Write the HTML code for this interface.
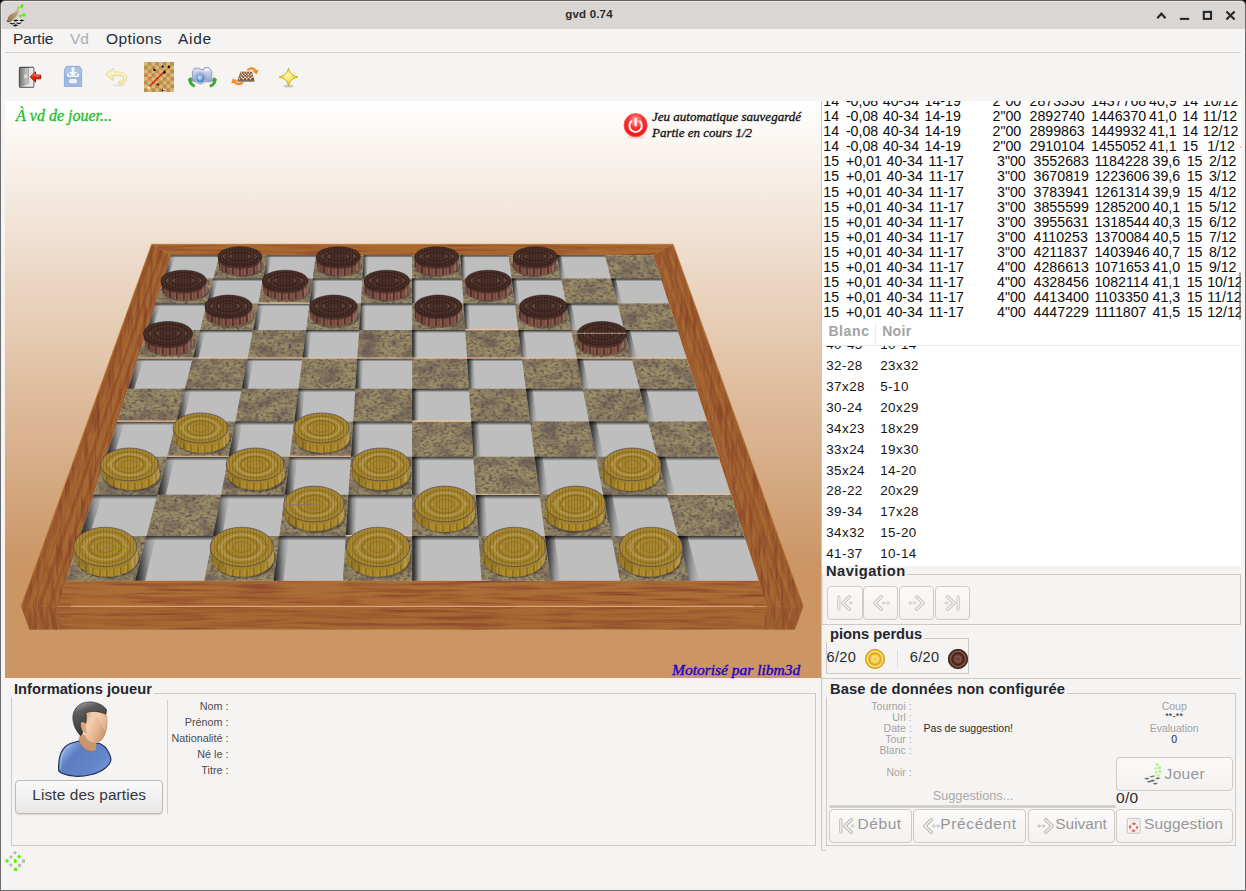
<!DOCTYPE html><html><head><meta charset="utf-8"><title>gvd 0.74</title><style>
html,body{margin:0;padding:0}
body{width:1246px;height:891px;position:relative;overflow:hidden;background:#f5f4f3;font-family:"Liberation Sans",sans-serif;color:#1a1a1a}
.abs{position:absolute}
#frame{position:absolute;left:0;top:0;width:1244px;height:889px;border:1px solid #6d6d6d;border-top-color:#5e5e5e;border-radius:5px 5px 0 0;pointer-events:none;z-index:50}
.crn{position:absolute;top:0;width:5px;height:5px;background:#050505}
#title{position:absolute;left:1px;top:1px;width:1244px;height:28px;background:#dad6d3;border-radius:4px 4px 0 0;box-shadow:inset 0 1px 0 #eae7e4, inset 1px 0 0 #e4e1de}
#title .t{position:absolute;left:0;width:1176px;top:7px;text-align:center;font-weight:bold;font-size:11.5px;color:#2b2b2b;letter-spacing:0.2px}
#menu span{position:absolute;top:30px;font-size:15.5px;color:#262a33;white-space:nowrap}
#msep{position:absolute;left:5px;top:52px;width:1236px;height:1px;background:#d4d2d0}
.gl{position:absolute;left:5px;top:101px}
.vt{position:absolute;font-family:"Liberation Serif",serif;font-style:italic;white-space:nowrap}
.ico{position:absolute}

.wh{position:absolute;background:#fff;overflow:hidden}
.lt span{position:absolute;font-size:14.2px;letter-spacing:0;white-space:nowrap;color:#0c0c0c;line-height:15px}
.mv span{position:absolute;font-size:13.4px;letter-spacing:0.45px;white-space:nowrap;color:#151515;line-height:15px}
.hd{position:absolute;font-weight:bold;font-size:14px;color:#a3a3a5;white-space:nowrap;letter-spacing:0.3px}
.gt{position:absolute;font-weight:bold;font-size:14.7px;color:#23262d;white-space:nowrap;background:#f5f4f3;line-height:16px}
.gb{position:absolute;border:1px solid #cdc9c6;box-sizing:border-box}
.btn{position:absolute;box-sizing:border-box;border:1px solid #cfcbc8;border-radius:4px;background:linear-gradient(#fbfaf9,#f3f2f1)}
.btn2{position:absolute;box-sizing:border-box;border:1px solid #bdb9b6;border-radius:4px;background:linear-gradient(#fafafa,#e9e8e7);box-shadow:0 1px 1px rgba(0,0,0,0.12)}
.bt{position:absolute;font-size:15.5px;color:#97979a;white-space:nowrap;line-height:18px;letter-spacing:0.3px}
.sl{position:absolute;font-size:10.5px;color:#a2a2a4;white-space:nowrap;line-height:11px;text-align:right}
.sd{position:absolute;font-size:10.5px;color:#2a2a2c;white-space:nowrap;line-height:11px}
.il{position:absolute;font-size:10.8px;color:#4a4a4e;white-space:nowrap;line-height:12px;text-align:right;width:120px;left:108.5px}
</style></head><body>
<div class="crn" style="left:0"></div><div class="crn" style="left:1241px"></div><div id="title"><div class="t">gvd 0.74</div><svg class="ico" style="left:4px;top:2px" width="24" height="24" viewBox="5 3 24 24">
<defs><linearGradient id="hg" x1="0" y1="1" x2="1" y2="0"><stop offset="0" stop-color="#8d7445"/><stop offset="0.6" stop-color="#b39a74"/><stop offset="1" stop-color="#d9c3a6"/></linearGradient></defs>
<g fill="#111"><path d="M6.2,20.9 l3.4,-1.3 2.8,1.1 -3.4,1.5z M12.8,20.6 l3.2,-1.2 2.8,1 -3.2,1.4z M19,20.4 l2.8,-1 2.6,1 -2.9,1.2z M9.4,23.2 l3.3,-1.3 2.9,1.1 -3.3,1.5z M15.8,23 l3.2,-1.2 2.8,1.1 -3.2,1.4z M12.6,25.4 l3,-1.1 2.6,1 -3,1.2z"/></g>
<g fill="#e9e9e9"><path d="M9.6,22 l3.2,-1.3 2.9,1.1 -3.2,1.4z M15.9,21.8 l3,-1.2 2.8,1 -3,1.3z"/></g>
<path d="M7.7,21.6 C7.2,17.6 9,15 12.6,13.6 C15,12.6 16.4,10.6 17.3,8.7 C17.9,7.5 19.2,7.8 19.1,9.2 C18.8,12.8 17.6,15.8 14.6,18 C12.8,19.3 11.4,20.6 10.8,21.9 Z" fill="url(#hg)"/>
<ellipse cx="22.9" cy="11" rx="1.5" ry="2.1" fill="#cfcdd1"/>
<g fill="#55f00a"><ellipse cx="21.9" cy="6.3" rx="1.5" ry="2.3" transform="rotate(22 21.9 6.3)"/><circle cx="18.5" cy="7.6" r="1.1"/><circle cx="20.4" cy="16" r="1.45"/><circle cx="24" cy="15" r="1.75"/></g>
</svg><svg class="ico" style="left:1150px;top:0" width="94" height="27" viewBox="1151 1 94 27">
<g fill="none" stroke="#23282d" stroke-width="2.1">
<path d="M1157.3,18.3 L1161.4,13.7 L1165.5,18.3" stroke-linejoin="miter"/>
<path d="M1179.9,18.9 H1189.2"/>
<rect x="1203.8" y="11.9" width="7.2" height="7"/>
<path d="M1226.4,11.6 L1234.6,19.6 M1234.6,11.6 L1226.4,19.6"/>
</g></svg></div>
<div id="menu"><span style="left:13px">Partie</span><span style="left:70px;color:#a9adb6">Vd</span><span style="left:106px;letter-spacing:0.4px">Options</span><span style="left:178px;letter-spacing:0.7px">Aide</span></div><div id="msep"></div>
<svg class="ico" style="left:17px;top:64px" width="28" height="26" viewBox="17 64 28 26">
<defs><linearGradient id="dg" x1="0" y1="0" x2="1" y2="0"><stop offset="0" stop-color="#6f6f6f"/><stop offset="0.55" stop-color="#c9c9c9"/><stop offset="1" stop-color="#f4f4f4"/></linearGradient></defs>
<rect x="19.4" y="67.4" width="14.4" height="19.8" rx="1" fill="url(#dg)" stroke="#4c4c4c" stroke-width="1.1"/>
<path d="M20,86.6 L28.5,83 L28.5,67.8 L33.4,67.8 L33.4,86.6z" fill="#e9e9e9" fill-opacity="0.85"/>
<path d="M20.5,86.5 L28.3,83.2 L28.3,68" fill="none" stroke="#8a8a8a" stroke-width="0.8"/>
<path d="M24.6,74 l2.3,2.3 -2.3,2.3 M26.9,76.3 h-3" fill="none" stroke="#f2f2f2" stroke-width="1"/>
<path d="M40.6,75.1 H35.6 V71.9 L30.2,76.9 L35.6,82 V78.8 H40.6z" fill="#e2220c" stroke="#a30f00" stroke-width="1" stroke-linejoin="round"/>
<path d="M39.9,75.9 H34.9 V73.7 L31.5,76.9" fill="none" stroke="#ff9a7a" stroke-width="0.8"/>
</svg>
<svg class="ico" style="left:62px;top:64px" width="22" height="25" viewBox="62 64 22 25">
<path d="M64.4,69.5 L66.4,66.4 H79.6 L81.6,69.5 V86.4 H64.4z" fill="#a9c3e8" stroke="#8eabd6" stroke-width="1"/>
<path d="M65.2,76.8 H80.8 V85.7 H65.2z" fill="#9db9e2"/>
<path d="M64.9,76.6 H81.1" stroke="#87a4d2" stroke-width="0.9"/>
<path d="M71.6,67.3 H74.4 V72 H77.3 L73,76 L68.7,72 H71.6z" fill="#f4f7fb"/>
<path d="M68,73.6 v2.6 h10 v-2.6" fill="none" stroke="#f4f7fb" stroke-width="1.6"/>
<rect x="69.6" y="79.6" width="6.8" height="3.2" rx="0.6" fill="#e8eef7" stroke="#f8fafd" stroke-width="0.9"/>
</svg>
<svg class="ico" style="left:103px;top:64px" width="27" height="25" viewBox="103 64 27 25">
<path d="M105.6,74.6 L113.3,68.4 V72.2 H119.5 C124,72.2 126.6,75 126.6,78.3 C126.6,81.6 124,84 120.2,84 H118.4 V81.4 H119.8 C122.2,81.4 123.5,80 123.5,78.3 C123.5,76.6 122.2,75.6 119.8,75.6 H113.3 V80.6z" fill="#f7eeb4" stroke="#e4d68c" stroke-width="1" stroke-linejoin="round"/>
<path d="M107.3,74.5 L112.5,70.3 V73.1 H119.6 C123,73.1 125,75 125.6,77" fill="none" stroke="#fffbe0" stroke-width="0.9"/>
<ellipse cx="119" cy="85.4" rx="6" ry="0.9" fill="#000" fill-opacity="0.08"/>
</svg>
<svg class="ico" style="left:144px;top:62px" width="30" height="30" viewBox="0 0 30 30"><rect width="30" height="30" fill="#d9b777"/><rect x="3.75" y="0.00" width="3.75" height="3.75" fill="#bd8d4b"/><rect x="11.25" y="0.00" width="3.75" height="3.75" fill="#bd8d4b"/><rect x="18.75" y="0.00" width="3.75" height="3.75" fill="#bd8d4b"/><rect x="26.25" y="0.00" width="3.75" height="3.75" fill="#bd8d4b"/><rect x="0.00" y="3.75" width="3.75" height="3.75" fill="#bd8d4b"/><rect x="7.50" y="3.75" width="3.75" height="3.75" fill="#bd8d4b"/><rect x="15.00" y="3.75" width="3.75" height="3.75" fill="#bd8d4b"/><rect x="22.50" y="3.75" width="3.75" height="3.75" fill="#bd8d4b"/><rect x="3.75" y="7.50" width="3.75" height="3.75" fill="#bd8d4b"/><rect x="11.25" y="7.50" width="3.75" height="3.75" fill="#bd8d4b"/><rect x="18.75" y="7.50" width="3.75" height="3.75" fill="#bd8d4b"/><rect x="26.25" y="7.50" width="3.75" height="3.75" fill="#bd8d4b"/><rect x="0.00" y="11.25" width="3.75" height="3.75" fill="#bd8d4b"/><rect x="7.50" y="11.25" width="3.75" height="3.75" fill="#bd8d4b"/><rect x="15.00" y="11.25" width="3.75" height="3.75" fill="#bd8d4b"/><rect x="22.50" y="11.25" width="3.75" height="3.75" fill="#bd8d4b"/><rect x="3.75" y="15.00" width="3.75" height="3.75" fill="#bd8d4b"/><rect x="11.25" y="15.00" width="3.75" height="3.75" fill="#bd8d4b"/><rect x="18.75" y="15.00" width="3.75" height="3.75" fill="#bd8d4b"/><rect x="26.25" y="15.00" width="3.75" height="3.75" fill="#bd8d4b"/><rect x="0.00" y="18.75" width="3.75" height="3.75" fill="#bd8d4b"/><rect x="7.50" y="18.75" width="3.75" height="3.75" fill="#bd8d4b"/><rect x="15.00" y="18.75" width="3.75" height="3.75" fill="#bd8d4b"/><rect x="22.50" y="18.75" width="3.75" height="3.75" fill="#bd8d4b"/><rect x="3.75" y="22.50" width="3.75" height="3.75" fill="#bd8d4b"/><rect x="11.25" y="22.50" width="3.75" height="3.75" fill="#bd8d4b"/><rect x="18.75" y="22.50" width="3.75" height="3.75" fill="#bd8d4b"/><rect x="26.25" y="22.50" width="3.75" height="3.75" fill="#bd8d4b"/><rect x="0.00" y="26.25" width="3.75" height="3.75" fill="#bd8d4b"/><rect x="7.50" y="26.25" width="3.75" height="3.75" fill="#bd8d4b"/><rect x="15.00" y="26.25" width="3.75" height="3.75" fill="#bd8d4b"/><rect x="22.50" y="26.25" width="3.75" height="3.75" fill="#bd8d4b"/><path d="M5.3,24.5 L21.7,8.1" stroke="#ee1111" stroke-width="1.15"/>
<path d="M19.5,11.5 L21.2,9.6" stroke="#111" stroke-width="2.2"/>
<circle cx="4.8" cy="25.6" r="1.3" fill="#fff"/>
<g fill="#0d0d0d"><circle cx="10.6" cy="7.8" r="1.4"/><circle cx="19" cy="4.4" r="1.2"/><circle cx="25" cy="4.8" r="1.2"/><path d="M12.2,23.3 l1.7,-2.6 1.7,2.6z"/><circle cx="18.8" cy="28" r="1.1"/></g>
<g fill="#fff"><circle cx="11.4" cy="7" r="0.6"/><circle cx="19.6" cy="3.7" r="0.5"/><circle cx="19.4" cy="27.4" r="0.6"/></g>
<circle cx="13.9" cy="23" r="0.7" fill="#e11"/><circle cx="6.5" cy="15.4" r="0.6" fill="#e11"/></svg>
<svg class="ico" style="left:185px;top:64px" width="34" height="26" viewBox="185 64 34 26">
<defs><linearGradient id="cg" x1="0" y1="0" x2="0" y2="1"><stop offset="0" stop-color="#dfe5f5"/><stop offset="1" stop-color="#94a3d2"/></linearGradient>
<radialGradient id="lg" cx="0.4" cy="0.35" r="0.7"><stop offset="0" stop-color="#d8ecfb"/><stop offset="0.6" stop-color="#6fa6d8"/><stop offset="1" stop-color="#3f72b0"/></radialGradient></defs>
<path d="M193.2,70.2 L194.4,68.2 H199.5 L200.4,69.4 H203.6 L204.4,67.6 H209 L210.4,70 C211.4,70.2 211.8,70.8 211.8,71.8 V80.2 C211.8,81.2 211.2,81.8 210.2,81.8 H194.2 C193,81.8 192.4,81.2 192.4,80.2 V71.8 C192.4,70.9 192.7,70.4 193.2,70.2z" fill="url(#cg)" stroke="#8c98c4" stroke-width="0.9"/>
<rect x="204.6" y="68.6" width="4.6" height="2.6" rx="0.8" fill="#f2f4fb"/>
<circle cx="200.4" cy="78.3" r="5.6" fill="#c9d0e8" stroke="#8f9bc8" stroke-width="0.9"/>
<circle cx="200.4" cy="78.3" r="3.9" fill="url(#lg)" stroke="#4a74ad" stroke-width="0.7"/>
<path d="M188.2,79.3 L190.8,77.4 L192.4,80.4 L191.2,80.6 C191.6,83 193,84.3 194.8,85 L194.2,87 C191.2,86.2 189.2,84.2 188.8,80.8z" fill="#3fae32" stroke="#2a8a22" stroke-width="0.6"/>
<path d="M216.6,79.6 L214,77.6 L212.2,80.6 L213.5,80.9 C213,83.1 211.6,84.4 209.8,85 L210.4,87 C213.4,86.3 215.4,84.3 215.9,81z" fill="#3fae32" stroke="#2a8a22" stroke-width="0.6"/>
</svg>
<svg class="ico" style="left:228px;top:64px" width="34" height="26" viewBox="228 64 34 26"><path d="M240.6,71.8 H251.8 L254.4,80.6 H237.4z" fill="#6b3d25"/><polygon fill="#f3e7cf" points="240.9,72.2 242.2,72.2 241.8,73.7 240.4,73.7"/><polygon fill="#8a5a3a" points="242.2,72.2 243.6,72.2 243.3,73.7 241.8,73.7"/><polygon fill="#f3e7cf" points="243.6,72.2 244.9,72.2 244.7,73.7 243.3,73.7"/><polygon fill="#8a5a3a" points="244.9,72.2 246.2,72.2 246.1,73.7 244.7,73.7"/><polygon fill="#f3e7cf" points="246.2,72.2 247.5,72.2 247.6,73.7 246.1,73.7"/><polygon fill="#8a5a3a" points="247.5,72.2 248.8,72.2 249.0,73.7 247.6,73.7"/><polygon fill="#f3e7cf" points="248.8,72.2 250.2,72.2 250.5,73.7 249.0,73.7"/><polygon fill="#8a5a3a" points="250.2,72.2 251.5,72.2 251.9,73.7 250.5,73.7"/><polygon fill="#8a5a3a" points="240.4,73.7 241.8,73.7 241.4,75.2 239.9,75.2"/><polygon fill="#f3e7cf" points="241.8,73.7 243.3,73.7 243.0,75.2 241.4,75.2"/><polygon fill="#8a5a3a" points="243.3,73.7 244.7,73.7 244.5,75.2 243.0,75.2"/><polygon fill="#f3e7cf" points="244.7,73.7 246.1,73.7 246.1,75.2 244.5,75.2"/><polygon fill="#8a5a3a" points="246.1,73.7 247.6,73.7 247.6,75.2 246.1,75.2"/><polygon fill="#f3e7cf" points="247.6,73.7 249.0,73.7 249.2,75.2 247.6,75.2"/><polygon fill="#8a5a3a" points="249.0,73.7 250.5,73.7 250.7,75.2 249.2,75.2"/><polygon fill="#f3e7cf" points="250.5,73.7 251.9,73.7 252.3,75.2 250.7,75.2"/><polygon fill="#f3e7cf" points="239.9,75.2 241.4,75.2 241.0,76.6 239.3,76.6"/><polygon fill="#8a5a3a" points="241.4,75.2 243.0,75.2 242.7,76.6 241.0,76.6"/><polygon fill="#f3e7cf" points="243.0,75.2 244.5,75.2 244.3,76.6 242.7,76.6"/><polygon fill="#8a5a3a" points="244.5,75.2 246.1,75.2 246.0,76.6 244.3,76.6"/><polygon fill="#f3e7cf" points="246.1,75.2 247.6,75.2 247.7,76.6 246.0,76.6"/><polygon fill="#8a5a3a" points="247.6,75.2 249.2,75.2 249.4,76.6 247.7,76.6"/><polygon fill="#f3e7cf" points="249.2,75.2 250.7,75.2 251.0,76.6 249.4,76.6"/><polygon fill="#8a5a3a" points="250.7,75.2 252.3,75.2 252.7,76.6 251.0,76.6"/><polygon fill="#8a5a3a" points="239.3,76.6 241.0,76.6 240.6,78.1 238.8,78.1"/><polygon fill="#f3e7cf" points="241.0,76.6 242.7,76.6 242.4,78.1 240.6,78.1"/><polygon fill="#8a5a3a" points="242.7,76.6 244.3,76.6 244.2,78.1 242.4,78.1"/><polygon fill="#f3e7cf" points="244.3,76.6 246.0,76.6 246.0,78.1 244.2,78.1"/><polygon fill="#8a5a3a" points="246.0,76.6 247.7,76.6 247.7,78.1 246.0,78.1"/><polygon fill="#f3e7cf" points="247.7,76.6 249.4,76.6 249.5,78.1 247.7,78.1"/><polygon fill="#8a5a3a" points="249.4,76.6 251.0,76.6 251.3,78.1 249.5,78.1"/><polygon fill="#f3e7cf" points="251.0,76.6 252.7,76.6 253.1,78.1 251.3,78.1"/><polygon fill="#f3e7cf" points="238.8,78.1 240.6,78.1 240.2,79.6 238.3,79.6"/><polygon fill="#8a5a3a" points="240.6,78.1 242.4,78.1 242.1,79.6 240.2,79.6"/><polygon fill="#f3e7cf" points="242.4,78.1 244.2,78.1 244.0,79.6 242.1,79.6"/><polygon fill="#8a5a3a" points="244.2,78.1 246.0,78.1 245.9,79.6 244.0,79.6"/><polygon fill="#f3e7cf" points="246.0,78.1 247.7,78.1 247.8,79.6 245.9,79.6"/><polygon fill="#8a5a3a" points="247.7,78.1 249.5,78.1 249.7,79.6 247.8,79.6"/><polygon fill="#f3e7cf" points="249.5,78.1 251.3,78.1 251.6,79.6 249.7,79.6"/><polygon fill="#8a5a3a" points="251.3,78.1 253.1,78.1 253.5,79.6 251.6,79.6"/><path d="M237.4,80.6 H254.4 V81.5 H237.4z" fill="#4a2a1a"/><path d="M247,69.6 C250,66.6 254.6,67 256.2,70.4 L258.2,69.8 L256.6,74 L252.8,71.6 L254.6,71 C253.4,68.8 250.4,68.8 248.4,70.8z" fill="#ff8a12" stroke="#f07400" stroke-width="0.4"/>
<path d="M243.4,83 C240.6,85.6 235.8,85.6 233.8,82.4 L231.6,83.2 L233,78.8 L237,80.8 L235.4,81.6 C236.8,83.6 239.8,83.4 241.8,81.8z" fill="#ff8a12" stroke="#f07400" stroke-width="0.4"/>
</svg>
<svg class="ico" style="left:276px;top:64px" width="26" height="26" viewBox="276 64 26 26">
<defs><radialGradient id="sg" cx="0.45" cy="0.4" r="0.6"><stop offset="0" stop-color="#fff9c0"/><stop offset="0.5" stop-color="#f3e35a"/><stop offset="1" stop-color="#e2c826"/></radialGradient></defs>
<ellipse cx="288.5" cy="86.2" rx="5" ry="1.4" fill="#000" fill-opacity="0.18"/>
<path d="M288.5,68 C289.4,72.6 291.6,75.2 297.8,77 C291.6,78.6 289.4,81.2 288.5,86 C287.6,81.2 285.4,78.6 279.2,77 C285.4,75.2 287.6,72.6 288.5,68z" fill="url(#sg)" stroke="#c9ad18" stroke-width="1" stroke-linejoin="round"/>
</svg>
<svg class="gl" width="816" height="577" viewBox="5 101 816 577">
<defs>
<linearGradient id="bg" x1="0" y1="0" x2="0" y2="1"><stop offset="0" stop-color="#ffffff"/><stop offset="0.81" stop-color="#cb9564"/><stop offset="1" stop-color="#cb9564"/></linearGradient>
<linearGradient id="shl" x1="0" y1="0" x2="1" y2="0"><stop offset="0" stop-color="#000" stop-opacity="0.85"/><stop offset="0.3" stop-color="#000" stop-opacity="0.58"/><stop offset="0.65" stop-color="#000" stop-opacity="0.2"/><stop offset="1" stop-color="#000" stop-opacity="0"/></linearGradient>
<linearGradient id="sht" x1="0" y1="0" x2="0" y2="1"><stop offset="0" stop-color="#000" stop-opacity="0.75"/><stop offset="1" stop-color="#000" stop-opacity="0"/></linearGradient>
<filter id="speck" x="0" y="0" width="100%" height="100%" color-interpolation-filters="sRGB">
<feTurbulence type="fractalNoise" baseFrequency="0.27 0.4" numOctaves="2" seed="4" result="n"/>
<feColorMatrix in="n" type="matrix" values="0 0 0 0 0.39  0 0 0 0 0.32  0 0 0 0 0.33  2.3 1.4 0 0 -1.68" result="d"/>
<feTurbulence type="fractalNoise" baseFrequency="0.05 0.09" numOctaves="2" seed="9" result="n2"/>
<feColorMatrix in="n2" type="matrix" values="0 0 0 0 0.32  0 0 0 0 0.26  0 0 0 0 0.28  1.4 0 0 0 -0.58" result="d2"/>
<feMerge result="m"><feMergeNode in="d2"/><feMergeNode in="d"/></feMerge>
<feComposite in="m" in2="SourceAlpha" operator="in" result="dd"/>
<feMerge><feMergeNode in="SourceGraphic"/><feMergeNode in="dd"/></feMerge>
</filter>
<filter id="woodh" x="0" y="0" width="100%" height="100%" color-interpolation-filters="sRGB">
<feTurbulence type="fractalNoise" baseFrequency="0.014 0.3" numOctaves="3" seed="11" result="n"/>
<feColorMatrix in="n" type="matrix" values="0 0 0 0 0.54  0 0 0 0 0.26  0 0 0 0 0.17  1.9 1.0 0 0 -1.3" result="d"/>
<feComposite in="d" in2="SourceAlpha" operator="in" result="dd"/>
<feMerge><feMergeNode in="SourceGraphic"/><feMergeNode in="dd"/></feMerge>
</filter>
<filter id="woodv" x="0" y="0" width="100%" height="100%" color-interpolation-filters="sRGB">
<feTurbulence type="fractalNoise" baseFrequency="0.32 0.03" numOctaves="3" seed="5" result="n"/>
<feColorMatrix in="n" type="matrix" values="0 0 0 0 0.50  0 0 0 0 0.24  0 0 0 0 0.15  1.7 0.9 0 0 -1.2" result="d"/>
<feComposite in="d" in2="SourceAlpha" operator="in" result="dd"/>
<feMerge><feMergeNode in="SourceGraphic"/><feMergeNode in="dd"/></feMerge>
</filter>
<pattern id="stY" width="7" height="40" patternUnits="userSpaceOnUse"><rect width="7" height="40" fill="#b08e2c"/><rect x="1" width="1.8" height="40" fill="#8e6e22"/><rect x="4.4" width="1" height="40" fill="#9e7e26"/></pattern>
<pattern id="stYt" width="3" height="40" patternUnits="userSpaceOnUse"><rect width="3" height="40" fill="#a88831"/><rect x="1" width="1" height="40" fill="#947528"/></pattern>
<pattern id="stB" width="7" height="40" patternUnits="userSpaceOnUse"><rect width="7" height="40" fill="#85564a"/><rect x="1" width="1.8" height="40" fill="#553229"/><rect x="4.6" width="1" height="40" fill="#6b4034"/></pattern>
<pattern id="stBt" width="3" height="40" patternUnits="userSpaceOnUse"><rect width="3" height="40" fill="#4c3129"/><rect x="1" width="1" height="40" fill="#412921"/></pattern>
<clipPath id="vw"><rect x="5" y="101" width="816" height="577"/></clipPath>
</defs>
<g clip-path="url(#vw)">
<rect x="5" y="101" width="816" height="577" fill="url(#bg)"/>
<g filter="url(#woodh)">
<polygon fill="#a96a31" points="151.7,244.3 673,244.3 653.1,255.2 171.3,255.2"/>
<polygon fill="#ab6d35" points="65.7,580.8 758.7,580.8 766.9,606.2 57.5,606.2"/>
<polygon fill="#a66933" points="57.5,607 766.9,607 762.1,629.6 62,629.6"/>
</g>
<g filter="url(#woodv)">
<polygon fill="#a56833" points="151.7,244.3 171.3,255.2 65.7,580.8 57.5,606.2 21.1,606.2"/>
<polygon fill="#a56833" points="673,244.3 653.1,255.2 758.7,580.8 766.9,606.2 803.3,606.2"/>
<polygon fill="#9f6332" points="21.1,606.2 57.5,606.2 62,629.6 29.3,629.6"/>
<polygon fill="#9f6332" points="803.3,606.2 766.9,606.2 762.1,629.6 794.9,629.6"/>
<polyline fill="none" stroke="#93502c" stroke-opacity="0.30" stroke-width="0.9" points="158,247.8 32.9,606.2 39.9,629.6"/>
<polyline fill="none" stroke="#8a4826" stroke-opacity="0.29" stroke-width="0.9" points="167.8,253.3 51,606.2 56.2,629.6"/>
<polyline fill="none" stroke="#8a4826" stroke-opacity="0.21" stroke-width="1.8" points="161.6,249.9 39.6,606.2 45.9,629.6"/>
<polyline fill="none" stroke="#9a5c2e" stroke-opacity="0.31" stroke-width="2.8" points="156.4,246.9 29.9,606.2 37.2,629.6"/>
<polyline fill="none" stroke="#93502c" stroke-opacity="0.37" stroke-width="2.2" points="154.1,245.7 25.6,606.2 33.3,629.6"/>
<polyline fill="none" stroke="#9a5c2e" stroke-opacity="0.30" stroke-width="3.1" points="152.9,245 23.4,606.2 31.3,629.6"/>
<polyline fill="none" stroke="#93502c" stroke-opacity="0.27" stroke-width="1.1" points="152.6,244.8 22.8,606.2 30.8,629.6"/>
<polyline fill="none" stroke="#9a4e30" stroke-opacity="0.35" stroke-width="2.4" points="154,245.6 25.4,606.2 33.2,629.6"/>
<polyline fill="none" stroke="#9a5c2e" stroke-opacity="0.37" stroke-width="1.7" points="153.7,245.4 24.8,606.2 32.7,629.6"/>
<polyline fill="none" stroke="#8a4826" stroke-opacity="0.35" stroke-width="2.3" points="162.4,250.3 41,606.2 47.2,629.6"/>
<polyline fill="none" stroke="#9a5c2e" stroke-opacity="0.31" stroke-width="1.6" points="161.4,249.7 39.2,606.2 45.5,629.6"/>
<polyline fill="none" stroke="#b47636" stroke-opacity="0.29" stroke-width="1.4" points="163.1,250.7 42.4,606.2 48.4,629.6"/>
<polyline fill="none" stroke="#93502c" stroke-opacity="0.20" stroke-width="1.5" points="155.2,246.3 27.6,606.2 35.2,629.6"/>
<polyline fill="none" stroke="#9a4e30" stroke-opacity="0.40" stroke-width="1.5" points="161.4,249.7 39.1,606.2 45.5,629.6"/>
<polyline fill="none" stroke="#8a4826" stroke-opacity="0.33" stroke-width="1.2" points="170.9,255 56.8,606.2 61.4,629.6"/>
<polyline fill="none" stroke="#b47636" stroke-opacity="0.31" stroke-width="3.1" points="158.4,248 33.5,606.2 40.5,629.6"/>
<polyline fill="none" stroke="#9a5c2e" stroke-opacity="0.35" stroke-width="2.9" points="153.2,245.1 23.9,606.2 31.8,629.6"/>
<polyline fill="none" stroke="#8e4a2a" stroke-opacity="0.29" stroke-width="2.0" points="157.8,247.7 32.5,606.2 39.6,629.6"/>
<polyline fill="none" stroke="#8a4826" stroke-opacity="0.43" stroke-width="3.1" points="167.3,253 50.1,606.2 55.4,629.6"/>
<polyline fill="none" stroke="#8e4a2a" stroke-opacity="0.20" stroke-width="2.6" points="161,249.5 38.4,606.2 44.8,629.6"/>
<polyline fill="none" stroke="#9a5c2e" stroke-opacity="0.48" stroke-width="2.8" points="157.8,247.7 32.4,606.2 39.4,629.6"/>
<polyline fill="none" stroke="#b47636" stroke-opacity="0.45" stroke-width="1.6" points="157.3,247.4 31.5,606.2 38.6,629.6"/>
<polyline fill="none" stroke="#9a4e30" stroke-opacity="0.23" stroke-width="1.1" points="654.3,254.6 769.1,606.2 764,629.6"/>
<polyline fill="none" stroke="#9a4e30" stroke-opacity="0.22" stroke-width="1.4" points="671.8,244.9 801.2,606.2 793,629.6"/>
<polyline fill="none" stroke="#b47636" stroke-opacity="0.20" stroke-width="1.9" points="665.2,248.6 789.1,606.2 782.1,629.6"/>
<polyline fill="none" stroke="#93502c" stroke-opacity="0.43" stroke-width="2.9" points="662.1,250.3 783.3,606.2 776.9,629.6"/>
<polyline fill="none" stroke="#b47636" stroke-opacity="0.48" stroke-width="2.4" points="667.5,247.3 793.2,606.2 785.8,629.6"/>
<polyline fill="none" stroke="#93502c" stroke-opacity="0.23" stroke-width="1.2" points="665.4,248.5 789.5,606.2 782.4,629.6"/>
<polyline fill="none" stroke="#93502c" stroke-opacity="0.18" stroke-width="2.8" points="668.4,246.8 794.9,606.2 787.3,629.6"/>
<polyline fill="none" stroke="#9a4e30" stroke-opacity="0.18" stroke-width="1.8" points="669.4,246.3 796.7,606.2 788.9,629.6"/>
<polyline fill="none" stroke="#9a5c2e" stroke-opacity="0.28" stroke-width="1.1" points="665.7,248.3 789.9,606.2 782.8,629.6"/>
<polyline fill="none" stroke="#9a5c2e" stroke-opacity="0.38" stroke-width="2.6" points="655.9,253.7 772,606.2 766.7,629.6"/>
<polyline fill="none" stroke="#8e4a2a" stroke-opacity="0.42" stroke-width="1.7" points="663.9,249.3 786.7,606.2 779.9,629.6"/>
<polyline fill="none" stroke="#8a4826" stroke-opacity="0.32" stroke-width="1.8" points="665.1,248.7 788.8,606.2 781.8,629.6"/>
<polyline fill="none" stroke="#93502c" stroke-opacity="0.31" stroke-width="1.1" points="669.2,246.4 796.4,606.2 788.6,629.6"/>
<polyline fill="none" stroke="#8a4826" stroke-opacity="0.18" stroke-width="1.2" points="661.1,250.9 781.4,606.2 775.2,629.6"/>
<polyline fill="none" stroke="#9a4e30" stroke-opacity="0.36" stroke-width="1.0" points="671,245.4 799.6,606.2 791.6,629.6"/>
<polyline fill="none" stroke="#b47636" stroke-opacity="0.22" stroke-width="1.4" points="668.9,246.6 795.7,606.2 788.1,629.6"/>
<polyline fill="none" stroke="#9a4e30" stroke-opacity="0.32" stroke-width="1.1" points="666.1,248.1 790.7,606.2 783.5,629.6"/>
<polyline fill="none" stroke="#b47636" stroke-opacity="0.32" stroke-width="1.5" points="663.3,249.6 785.5,606.2 778.9,629.6"/>
<polyline fill="none" stroke="#8e4a2a" stroke-opacity="0.28" stroke-width="1.4" points="670.1,245.9 798.1,606.2 790.2,629.6"/>
<polyline fill="none" stroke="#93502c" stroke-opacity="0.33" stroke-width="1.3" points="656.5,253.4 773.1,606.2 767.7,629.6"/>
<polyline fill="none" stroke="#9a4e30" stroke-opacity="0.22" stroke-width="2.1" points="654.1,254.7 768.7,606.2 763.7,629.6"/>
<polyline fill="none" stroke="#9a5c2e" stroke-opacity="0.27" stroke-width="2.3" points="672.5,244.6 802.3,606.2 794,629.6"/>
</g>
<line x1="71" y1="606.3" x2="753" y2="606.3" stroke="#dca479" stroke-width="1.2"/>
<polyline fill="none" stroke="#b9772f" stroke-width="0.8" points="21.1,606.2 151.7,244.3 673,244.3 803.3,606.2"/>
<polygon fill="#bebebe" points="171.3,255.2 653.1,255.2 758.7,580.8 65.7,580.8"/>
<g filter="url(#speck)" fill="#998d66">
<polygon points="219.4,255.2 267.6,255.2 263.1,278.6 213.4,278.6"/>
<polygon points="315.8,255.2 364,255.2 362.5,278.6 312.8,278.6"/>
<polygon points="412.2,255.2 460.4,255.2 461.9,278.6 412.2,278.6"/>
<polygon points="508.6,255.2 556.8,255.2 561.3,278.6 511.6,278.6"/>
<polygon points="605,255.2 653.1,255.2 660.7,278.6 611,278.6"/>
<polygon points="163.7,278.6 213.4,278.6 206.9,303.5 155.6,303.5"/>
<polygon points="263.1,278.6 312.8,278.6 309.6,303.5 258.3,303.5"/>
<polygon points="362.5,278.6 412.2,278.6 412.2,303.5 360.9,303.5"/>
<polygon points="461.9,278.6 511.6,278.6 514.8,303.5 463.5,303.5"/>
<polygon points="561.3,278.6 611,278.6 617.5,303.5 566.1,303.5"/>
<polygon points="206.9,303.5 258.3,303.5 253.1,330 200.1,330"/>
<polygon points="309.6,303.5 360.9,303.5 359.2,330 306.1,330"/>
<polygon points="412.2,303.5 463.5,303.5 465.2,330 412.2,330"/>
<polygon points="514.8,303.5 566.1,303.5 571.3,330 518.3,330"/>
<polygon points="617.5,303.5 668.8,303.5 677.4,330 624.3,330"/>
<polygon points="147,330 200.1,330 192.7,358.4 137.8,358.4"/>
<polygon points="253.1,330 306.1,330 302.4,358.4 247.6,358.4"/>
<polygon points="359.2,330 412.2,330 412.2,358.4 357.3,358.4"/>
<polygon points="465.2,330 518.3,330 522,358.4 467.1,358.4"/>
<polygon points="571.3,330 624.3,330 631.7,358.4 576.8,358.4"/>
<polygon points="192.7,358.4 247.6,358.4 241.7,388.8 184.8,388.8"/>
<polygon points="302.4,358.4 357.3,358.4 355.4,388.8 298.5,388.8"/>
<polygon points="412.2,358.4 467.1,358.4 469,388.8 412.2,388.8"/>
<polygon points="522,358.4 576.8,358.4 582.7,388.8 525.9,388.8"/>
<polygon points="631.7,358.4 686.6,358.4 696.4,388.8 639.6,388.8"/>
<polygon points="128,388.8 184.8,388.8 176.3,421.5 117.4,421.5"/>
<polygon points="241.7,388.8 298.5,388.8 294.3,421.5 235.3,421.5"/>
<polygon points="355.4,388.8 412.2,388.8 412.2,421.5 353.2,421.5"/>
<polygon points="469,388.8 525.9,388.8 530.1,421.5 471.2,421.5"/>
<polygon points="582.7,388.8 639.6,388.8 648.1,421.5 589.1,421.5"/>
<polygon points="176.3,421.5 235.3,421.5 228.5,456.7 167.2,456.7"/>
<polygon points="294.3,421.5 353.2,421.5 351,456.7 289.7,456.7"/>
<polygon points="412.2,421.5 471.2,421.5 473.4,456.7 412.2,456.7"/>
<polygon points="530.1,421.5 589.1,421.5 595.9,456.7 534.7,456.7"/>
<polygon points="648.1,421.5 707,421.5 718.4,456.7 657.2,456.7"/>
<polygon points="106,456.7 167.2,456.7 157.3,494.7 93.6,494.7"/>
<polygon points="228.5,456.7 289.7,456.7 284.8,494.7 221.1,494.7"/>
<polygon points="351,456.7 412.2,456.7 412.2,494.7 348.5,494.7"/>
<polygon points="473.4,456.7 534.7,456.7 539.6,494.7 475.9,494.7"/>
<polygon points="595.9,456.7 657.2,456.7 667.1,494.7 603.3,494.7"/>
<polygon points="157.3,494.7 221.1,494.7 213,536 146.6,536"/>
<polygon points="284.8,494.7 348.5,494.7 345.8,536 279.4,536"/>
<polygon points="412.2,494.7 475.9,494.7 478.6,536 412.2,536"/>
<polygon points="539.6,494.7 603.3,494.7 611.4,536 545,536"/>
<polygon points="667.1,494.7 730.8,494.7 744.1,536 677.8,536"/>
<polygon points="80.3,536 146.6,536 135,580.8 65.7,580.8"/>
<polygon points="213,536 279.4,536 273.6,580.8 204.3,580.8"/>
<polygon points="345.8,536 412.2,536 412.2,580.8 342.9,580.8"/>
<polygon points="478.6,536 545,536 550.8,580.8 481.5,580.8"/>
<polygon points="611.4,536 677.8,536 689.4,580.8 620.1,580.8"/>
</g>
<polygon fill="url(#shl)" points="171.3,255.2 175.3,255.2 167.9,278.6 163.7,278.6"/>
<polygon fill="url(#sht)" points="171.3,255.2 219.4,255.2 218.8,257.7 170.4,257.7"/>
<polygon fill="url(#shl)" points="267.6,255.2 271.7,255.2 267.3,278.6 263.1,278.6"/>
<polygon fill="url(#sht)" points="267.6,255.2 315.8,255.2 315.5,257.7 267.1,257.7"/>
<polygon fill="url(#shl)" points="364,255.2 368.1,255.2 366.7,278.6 362.5,278.6"/>
<polygon fill="url(#sht)" points="364,255.2 412.2,255.2 412.2,257.7 363.8,257.7"/>
<polygon fill="url(#shl)" points="460.4,255.2 464.5,255.2 466.1,278.6 461.9,278.6"/>
<polygon fill="url(#sht)" points="460.4,255.2 508.6,255.2 508.9,257.7 460.6,257.7"/>
<polygon fill="url(#shl)" points="556.8,255.2 560.9,255.2 565.5,278.6 561.3,278.6"/>
<polygon fill="url(#sht)" points="556.8,255.2 605,255.2 605.6,257.7 557.3,257.7"/>
<polygon fill="url(#shl)" points="213.4,278.6 217.9,278.6 211.6,303.5 206.9,303.5"/>
<polygon fill="url(#sht)" points="213.4,278.6 263.1,278.6 262.6,281.3 212.7,281.3"/>
<polygon fill="url(#shl)" points="312.8,278.6 317.3,278.6 314.3,303.5 309.6,303.5"/>
<polygon fill="url(#sht)" points="312.8,278.6 362.5,278.6 362.3,281.3 312.4,281.3"/>
<polygon fill="url(#shl)" points="412.2,278.6 416.7,278.6 416.9,303.5 412.2,303.5"/>
<polygon fill="url(#sht)" points="412.2,278.6 461.9,278.6 462.1,281.3 412.2,281.3"/>
<polygon fill="url(#shl)" points="511.6,278.6 516.2,278.6 519.5,303.5 514.8,303.5"/>
<polygon fill="url(#sht)" points="511.6,278.6 561.3,278.6 561.8,281.3 512,281.3"/>
<polygon fill="url(#shl)" points="611,278.6 615.6,278.6 622.2,303.5 617.5,303.5"/>
<polygon fill="url(#sht)" points="611,278.6 660.7,278.6 661.6,281.3 611.7,281.3"/>
<polygon fill="url(#shl)" points="155.6,303.5 160.6,303.5 152.2,330 147,330"/>
<polygon fill="url(#sht)" points="155.6,303.5 206.9,303.5 206.2,306.3 154.7,306.3"/>
<polygon fill="url(#shl)" points="258.3,303.5 263.3,303.5 258.3,330 253.1,330"/>
<polygon fill="url(#sht)" points="258.3,303.5 309.6,303.5 309.2,306.3 257.7,306.3"/>
<polygon fill="url(#shl)" points="360.9,303.5 365.9,303.5 364.4,330 359.2,330"/>
<polygon fill="url(#sht)" points="360.9,303.5 412.2,303.5 412.2,306.3 360.7,306.3"/>
<polygon fill="url(#shl)" points="463.5,303.5 468.5,303.5 470.4,330 465.2,330"/>
<polygon fill="url(#sht)" points="463.5,303.5 514.8,303.5 515.2,306.3 463.7,306.3"/>
<polygon fill="url(#shl)" points="566.1,303.5 571.2,303.5 576.5,330 571.3,330"/>
<polygon fill="url(#sht)" points="566.1,303.5 617.5,303.5 618.2,306.3 566.7,306.3"/>
<polygon fill="url(#shl)" points="200.1,330 205.6,330 198.4,358.4 192.7,358.4"/>
<polygon fill="url(#sht)" points="200.1,330 253.1,330 252.5,333 199.3,333"/>
<polygon fill="url(#shl)" points="306.1,330 311.7,330 308.2,358.4 302.4,358.4"/>
<polygon fill="url(#sht)" points="306.1,330 359.2,330 359,333 305.7,333"/>
<polygon fill="url(#shl)" points="412.2,330 417.7,330 417.9,358.4 412.2,358.4"/>
<polygon fill="url(#sht)" points="412.2,330 465.2,330 465.4,333 412.2,333"/>
<polygon fill="url(#shl)" points="518.3,330 523.8,330 527.7,358.4 522,358.4"/>
<polygon fill="url(#sht)" points="518.3,330 571.3,330 571.9,333 518.7,333"/>
<polygon fill="url(#shl)" points="624.3,330 629.9,330 637.4,358.4 631.7,358.4"/>
<polygon fill="url(#sht)" points="624.3,330 677.4,330 678.4,333 625.1,333"/>
<polygon fill="url(#shl)" points="137.8,358.4 143.9,358.4 134.3,388.8 128,388.8"/>
<polygon fill="url(#sht)" points="137.8,358.4 192.7,358.4 191.9,361.6 136.8,361.6"/>
<polygon fill="url(#shl)" points="247.6,358.4 253.7,358.4 248,388.8 241.7,388.8"/>
<polygon fill="url(#sht)" points="247.6,358.4 302.4,358.4 302,361.6 246.9,361.6"/>
<polygon fill="url(#shl)" points="357.3,358.4 363.4,358.4 361.7,388.8 355.4,388.8"/>
<polygon fill="url(#sht)" points="357.3,358.4 412.2,358.4 412.2,361.6 357.1,361.6"/>
<polygon fill="url(#shl)" points="467.1,358.4 473.2,358.4 475.4,388.8 469,388.8"/>
<polygon fill="url(#sht)" points="467.1,358.4 522,358.4 522.4,361.6 467.3,361.6"/>
<polygon fill="url(#shl)" points="576.8,358.4 582.9,358.4 589.1,388.8 582.7,388.8"/>
<polygon fill="url(#sht)" points="576.8,358.4 631.7,358.4 632.5,361.6 577.5,361.6"/>
<polygon fill="url(#shl)" points="184.8,388.8 191.5,388.8 183.3,421.5 176.3,421.5"/>
<polygon fill="url(#sht)" points="184.8,388.8 241.7,388.8 241,392.3 183.9,392.3"/>
<polygon fill="url(#shl)" points="298.5,388.8 305.2,388.8 301.2,421.5 294.3,421.5"/>
<polygon fill="url(#sht)" points="298.5,388.8 355.4,388.8 355.1,392.3 298.1,392.3"/>
<polygon fill="url(#shl)" points="412.2,388.8 418.9,388.8 419.1,421.5 412.2,421.5"/>
<polygon fill="url(#sht)" points="412.2,388.8 469,388.8 469.3,392.3 412.2,392.3"/>
<polygon fill="url(#shl)" points="525.9,388.8 532.6,388.8 537.1,421.5 530.1,421.5"/>
<polygon fill="url(#sht)" points="525.9,388.8 582.7,388.8 583.4,392.3 526.3,392.3"/>
<polygon fill="url(#shl)" points="639.6,388.8 646.3,388.8 655,421.5 648.1,421.5"/>
<polygon fill="url(#sht)" points="639.6,388.8 696.4,388.8 697.6,392.3 640.5,392.3"/>
<polygon fill="url(#shl)" points="117.4,421.5 124.7,421.5 113.6,456.7 106,456.7"/>
<polygon fill="url(#sht)" points="117.4,421.5 176.3,421.5 175.4,425.2 116.2,425.2"/>
<polygon fill="url(#shl)" points="235.3,421.5 242.6,421.5 236,456.7 228.5,456.7"/>
<polygon fill="url(#sht)" points="235.3,421.5 294.3,421.5 293.8,425.2 234.6,425.2"/>
<polygon fill="url(#shl)" points="353.2,421.5 360.5,421.5 358.5,456.7 351,456.7"/>
<polygon fill="url(#sht)" points="353.2,421.5 412.2,421.5 412.2,425.2 353,425.2"/>
<polygon fill="url(#shl)" points="471.2,421.5 478.5,421.5 481,456.7 473.4,456.7"/>
<polygon fill="url(#sht)" points="471.2,421.5 530.1,421.5 530.6,425.2 471.4,425.2"/>
<polygon fill="url(#shl)" points="589.1,421.5 596.4,421.5 603.5,456.7 595.9,456.7"/>
<polygon fill="url(#sht)" points="589.1,421.5 648.1,421.5 649,425.2 589.8,425.2"/>
<polygon fill="url(#shl)" points="167.2,456.7 175.2,456.7 165.7,494.7 157.3,494.7"/>
<polygon fill="url(#sht)" points="167.2,456.7 228.5,456.7 227.7,460.7 166.2,460.7"/>
<polygon fill="url(#shl)" points="289.7,456.7 297.7,456.7 293.1,494.7 284.8,494.7"/>
<polygon fill="url(#sht)" points="289.7,456.7 351,456.7 350.7,460.7 289.2,460.7"/>
<polygon fill="url(#shl)" points="412.2,456.7 420.2,456.7 420.5,494.7 412.2,494.7"/>
<polygon fill="url(#sht)" points="412.2,456.7 473.4,456.7 473.7,460.7 412.2,460.7"/>
<polygon fill="url(#shl)" points="534.7,456.7 542.7,456.7 547.9,494.7 539.6,494.7"/>
<polygon fill="url(#sht)" points="534.7,456.7 595.9,456.7 596.7,460.7 535.2,460.7"/>
<polygon fill="url(#shl)" points="657.2,456.7 665.2,456.7 675.4,494.7 667.1,494.7"/>
<polygon fill="url(#sht)" points="657.2,456.7 718.4,456.7 719.8,460.7 658.2,460.7"/>
<polygon fill="url(#shl)" points="93.6,494.7 102.4,494.7 89.4,536 80.3,536"/>
<polygon fill="url(#sht)" points="93.6,494.7 157.3,494.7 156.2,499.1 92.2,499.1"/>
<polygon fill="url(#shl)" points="221.1,494.7 229.8,494.7 222.1,536 213,536"/>
<polygon fill="url(#sht)" points="221.1,494.7 284.8,494.7 284.2,499.1 220.2,499.1"/>
<polygon fill="url(#shl)" points="348.5,494.7 357.2,494.7 354.9,536 345.8,536"/>
<polygon fill="url(#sht)" points="348.5,494.7 412.2,494.7 412.2,499.1 348.2,499.1"/>
<polygon fill="url(#shl)" points="475.9,494.7 484.6,494.7 487.7,536 478.6,536"/>
<polygon fill="url(#sht)" points="475.9,494.7 539.6,494.7 540.2,499.1 476.2,499.1"/>
<polygon fill="url(#shl)" points="603.3,494.7 612.1,494.7 620.5,536 611.4,536"/>
<polygon fill="url(#sht)" points="603.3,494.7 667.1,494.7 668.2,499.1 604.2,499.1"/>
<polygon fill="url(#shl)" points="146.6,536 156.2,536 145,580.8 135,580.8"/>
<polygon fill="url(#sht)" points="146.6,536 213,536 212.1,540.7 145.4,540.7"/>
<polygon fill="url(#shl)" points="279.4,536 288.9,536 283.6,580.8 273.6,580.8"/>
<polygon fill="url(#sht)" points="279.4,536 345.8,536 345.5,540.7 278.8,540.7"/>
<polygon fill="url(#shl)" points="412.2,536 421.7,536 422.1,580.8 412.2,580.8"/>
<polygon fill="url(#sht)" points="412.2,536 478.6,536 478.9,540.7 412.2,540.7"/>
<polygon fill="url(#shl)" points="545,536 554.5,536 560.7,580.8 550.8,580.8"/>
<polygon fill="url(#sht)" points="545,536 611.4,536 612.3,540.7 545.6,540.7"/>
<polygon fill="url(#shl)" points="677.8,536 687.3,536 699.3,580.8 689.4,580.8"/>
<polygon fill="url(#sht)" points="677.8,536 744.1,536 745.7,540.7 679,540.7"/>
<line x1="258.3" y1="303.1" x2="309.6" y2="303.1" stroke="#efc29a" stroke-width="1.1"/>
<line x1="465.2" y1="329.6" x2="518.3" y2="329.6" stroke="#efc29a" stroke-width="1.1"/>
<line x1="137.8" y1="358" x2="686.6" y2="358" stroke="#efc29a" stroke-width="1.1"/>
<line x1="117.4" y1="421.1" x2="176.3" y2="421.1" stroke="#efc29a" stroke-width="1.1"/>
<line x1="412.2" y1="421.1" x2="471.2" y2="421.1" stroke="#efc29a" stroke-width="1.1"/>
<line x1="167.2" y1="456.3" x2="228.5" y2="456.3" stroke="#efc29a" stroke-width="1.1"/>
<line x1="289.7" y1="456.3" x2="351" y2="456.3" stroke="#efc29a" stroke-width="1.1"/>
<line x1="475.9" y1="494.3" x2="539.6" y2="494.3" stroke="#efc29a" stroke-width="1.1"/>
<line x1="667.1" y1="494.3" x2="730.8" y2="494.3" stroke="#efc29a" stroke-width="1.1"/>
<line x1="345.8" y1="535.6" x2="412.2" y2="535.6" stroke="#efc29a" stroke-width="1.1"/>
<ellipse cx="241.7" cy="266.9" rx="22.7" ry="10" fill="#000" fill-opacity="0.25"/><path fill="url(#stB)" d="M218,256.3 L219,265.9 A21.9 9.5 0 0 0 262.8,265.9 L261.8,256.3 Z"/><path fill="#4a2e27" fill-opacity="0.93" d="M218,256.3 L218,259.2 A21.9 9.5 0 0 0 261.8,259.2 L261.8,256.3 Z"/><path fill="#000" fill-opacity="0.10" d="M218,256.3 L219,265.9 A21.9 9.5 0 0 0 228.9,273.8 L227.8,264.2 Z"/><path fill="#fff" fill-opacity="0.13" d="M261.8,256.3 L262.8,265.9 A21.9 9.5 0 0 1 258.5,271.6 L257.4,262 Z"/><ellipse cx="239.9" cy="256.3" rx="21.9" ry="9.5" fill="url(#stBt)" stroke="#140d10" stroke-width="0.8" stroke-opacity="0.6"/><ellipse cx="239.9" cy="256.6" rx="17.5" ry="7.6" fill="none" stroke="#2a1915" stroke-opacity="0.5" stroke-width="1.2"/><ellipse cx="239.9" cy="256.6" rx="11" ry="4.7" fill="none" stroke="#2a1915" stroke-opacity="0.5" stroke-width="1.4"/><ellipse cx="239.9" cy="256.6" rx="5.9" ry="2.6" fill="none" stroke="#2a1915" stroke-opacity="0.35" stroke-width="1.1"/><path d="M224.6,254.7 l-1.6,1.6 l1.6,1.6" fill="none" stroke="#b5a79c" stroke-opacity="0.55" stroke-width="0.9"/><path d="M231.2,254.7 l-1.6,1.6 l1.6,1.6" fill="none" stroke="#b5a79c" stroke-opacity="0.55" stroke-width="0.9"/><path d="M248.6,254.7 l1.6,1.6 l-1.6,1.6" fill="none" stroke="#b5a79c" stroke-opacity="0.55" stroke-width="0.9"/><path d="M255.2,254.7 l1.6,1.6 l-1.6,1.6" fill="none" stroke="#b5a79c" stroke-opacity="0.55" stroke-width="0.9"/>
<ellipse cx="339.6" cy="266.9" rx="22.7" ry="10" fill="#000" fill-opacity="0.25"/><path fill="url(#stB)" d="M316.4,256.3 L316.9,265.9 A21.9 9.5 0 0 0 360.7,265.9 L360.3,256.3 Z"/><path fill="#4a2e27" fill-opacity="0.93" d="M316.4,256.3 L316.4,259.2 A21.9 9.5 0 0 0 360.3,259.2 L360.3,256.3 Z"/><path fill="#000" fill-opacity="0.10" d="M316.4,256.3 L316.9,265.9 A21.9 9.5 0 0 0 326.7,273.8 L326.3,264.2 Z"/><path fill="#fff" fill-opacity="0.13" d="M360.3,256.3 L360.7,265.9 A21.9 9.5 0 0 1 356.3,271.6 L355.9,262 Z"/><ellipse cx="338.4" cy="256.3" rx="21.9" ry="9.5" fill="url(#stBt)" stroke="#140d10" stroke-width="0.8" stroke-opacity="0.6"/><ellipse cx="338.4" cy="256.6" rx="17.5" ry="7.6" fill="none" stroke="#2a1915" stroke-opacity="0.5" stroke-width="1.2"/><ellipse cx="338.4" cy="256.6" rx="11" ry="4.7" fill="none" stroke="#2a1915" stroke-opacity="0.5" stroke-width="1.4"/><ellipse cx="338.4" cy="256.6" rx="5.9" ry="2.6" fill="none" stroke="#2a1915" stroke-opacity="0.35" stroke-width="1.1"/><path d="M323.1,254.7 l-1.6,1.6 l1.6,1.6" fill="none" stroke="#b5a79c" stroke-opacity="0.55" stroke-width="0.9"/><path d="M329.7,254.7 l-1.6,1.6 l1.6,1.6" fill="none" stroke="#b5a79c" stroke-opacity="0.55" stroke-width="0.9"/><path d="M347,254.7 l1.6,1.6 l-1.6,1.6" fill="none" stroke="#b5a79c" stroke-opacity="0.55" stroke-width="0.9"/><path d="M353.6,254.7 l1.6,1.6 l-1.6,1.6" fill="none" stroke="#b5a79c" stroke-opacity="0.55" stroke-width="0.9"/>
<ellipse cx="437.5" cy="266.9" rx="22.7" ry="10" fill="#000" fill-opacity="0.25"/><path fill="url(#stB)" d="M414.9,256.3 L414.7,265.9 A21.9 9.5 0 0 0 458.6,265.9 L458.7,256.3 Z"/><path fill="#4a2e27" fill-opacity="0.93" d="M414.9,256.3 L414.9,259.2 A21.9 9.5 0 0 0 458.7,259.2 L458.7,256.3 Z"/><path fill="#000" fill-opacity="0.10" d="M414.9,256.3 L414.7,265.9 A21.9 9.5 0 0 0 424.6,273.8 L424.8,264.2 Z"/><path fill="#fff" fill-opacity="0.13" d="M458.7,256.3 L458.6,265.9 A21.9 9.5 0 0 1 454.2,271.6 L454.4,262 Z"/><ellipse cx="436.8" cy="256.3" rx="21.9" ry="9.5" fill="url(#stBt)" stroke="#140d10" stroke-width="0.8" stroke-opacity="0.6"/><ellipse cx="436.8" cy="256.6" rx="17.5" ry="7.6" fill="none" stroke="#2a1915" stroke-opacity="0.5" stroke-width="1.2"/><ellipse cx="436.8" cy="256.6" rx="11" ry="4.7" fill="none" stroke="#2a1915" stroke-opacity="0.5" stroke-width="1.4"/><ellipse cx="436.8" cy="256.6" rx="5.9" ry="2.6" fill="none" stroke="#2a1915" stroke-opacity="0.35" stroke-width="1.1"/><path d="M421.5,254.7 l-1.6,1.6 l1.6,1.6" fill="none" stroke="#b5a79c" stroke-opacity="0.55" stroke-width="0.9"/><path d="M428.1,254.7 l-1.6,1.6 l1.6,1.6" fill="none" stroke="#b5a79c" stroke-opacity="0.55" stroke-width="0.9"/><path d="M445.5,254.7 l1.6,1.6 l-1.6,1.6" fill="none" stroke="#b5a79c" stroke-opacity="0.55" stroke-width="0.9"/><path d="M452.1,254.7 l1.6,1.6 l-1.6,1.6" fill="none" stroke="#b5a79c" stroke-opacity="0.55" stroke-width="0.9"/>
<ellipse cx="535.3" cy="266.9" rx="22.7" ry="10" fill="#000" fill-opacity="0.25"/><path fill="url(#stB)" d="M513.3,256.3 L512.6,265.9 A21.9 9.5 0 0 0 556.5,265.9 L557.2,256.3 Z"/><path fill="#4a2e27" fill-opacity="0.93" d="M513.3,256.3 L513.3,259.2 A21.9 9.5 0 0 0 557.2,259.2 L557.2,256.3 Z"/><path fill="#000" fill-opacity="0.10" d="M513.3,256.3 L512.6,265.9 A21.9 9.5 0 0 0 522.5,273.8 L523.2,264.2 Z"/><path fill="#fff" fill-opacity="0.13" d="M557.2,256.3 L556.5,265.9 A21.9 9.5 0 0 1 552.1,271.6 L552.8,262 Z"/><ellipse cx="535.3" cy="256.3" rx="21.9" ry="9.5" fill="url(#stBt)" stroke="#140d10" stroke-width="0.8" stroke-opacity="0.6"/><ellipse cx="535.3" cy="256.6" rx="17.5" ry="7.6" fill="none" stroke="#2a1915" stroke-opacity="0.5" stroke-width="1.2"/><ellipse cx="535.3" cy="256.6" rx="11" ry="4.7" fill="none" stroke="#2a1915" stroke-opacity="0.5" stroke-width="1.4"/><ellipse cx="535.3" cy="256.6" rx="5.9" ry="2.6" fill="none" stroke="#2a1915" stroke-opacity="0.35" stroke-width="1.1"/><path d="M520,254.7 l-1.6,1.6 l1.6,1.6" fill="none" stroke="#b5a79c" stroke-opacity="0.55" stroke-width="0.9"/><path d="M526.6,254.7 l-1.6,1.6 l1.6,1.6" fill="none" stroke="#b5a79c" stroke-opacity="0.55" stroke-width="0.9"/><path d="M544,254.7 l1.6,1.6 l-1.6,1.6" fill="none" stroke="#b5a79c" stroke-opacity="0.55" stroke-width="0.9"/><path d="M550.5,254.7 l1.6,1.6 l-1.6,1.6" fill="none" stroke="#b5a79c" stroke-opacity="0.55" stroke-width="0.9"/>
<ellipse cx="185.8" cy="291" rx="23.5" ry="10.7" fill="#000" fill-opacity="0.25"/><path fill="url(#stB)" d="M160.9,280.4 L162.2,290 A22.7 10.2 0 0 0 207.7,290 L206.3,280.4 Z"/><path fill="#4a2e27" fill-opacity="0.93" d="M160.9,280.4 L160.9,283.3 A22.7 10.2 0 0 0 206.3,283.3 L206.3,280.4 Z"/><path fill="#000" fill-opacity="0.10" d="M160.9,280.4 L162.2,290 A22.7 10.2 0 0 0 172.5,298.5 L171.1,288.8 Z"/><path fill="#fff" fill-opacity="0.13" d="M206.3,280.4 L207.7,290 A22.7 10.2 0 0 1 203.1,296.1 L201.8,286.5 Z"/><ellipse cx="183.6" cy="280.4" rx="22.7" ry="10.2" fill="url(#stBt)" stroke="#140d10" stroke-width="0.8" stroke-opacity="0.6"/><ellipse cx="183.6" cy="280.7" rx="18.2" ry="8.1" fill="none" stroke="#2a1915" stroke-opacity="0.5" stroke-width="1.2"/><ellipse cx="183.6" cy="280.7" rx="11.4" ry="5.1" fill="none" stroke="#2a1915" stroke-opacity="0.5" stroke-width="1.4"/><ellipse cx="183.6" cy="280.7" rx="6.1" ry="2.7" fill="none" stroke="#2a1915" stroke-opacity="0.35" stroke-width="1.1"/><path d="M167.8,278.8 l-1.6,1.6 l1.6,1.6" fill="none" stroke="#b5a79c" stroke-opacity="0.55" stroke-width="0.9"/><path d="M174.6,278.8 l-1.6,1.6 l1.6,1.6" fill="none" stroke="#b5a79c" stroke-opacity="0.55" stroke-width="0.9"/><path d="M192.6,278.8 l1.6,1.6 l-1.6,1.6" fill="none" stroke="#b5a79c" stroke-opacity="0.55" stroke-width="0.9"/><path d="M199.4,278.8 l1.6,1.6 l-1.6,1.6" fill="none" stroke="#b5a79c" stroke-opacity="0.55" stroke-width="0.9"/>
<ellipse cx="286.8" cy="291" rx="23.5" ry="10.7" fill="#000" fill-opacity="0.25"/><path fill="url(#stB)" d="M262.5,280.4 L263.2,290 A22.7 10.2 0 0 0 308.7,290 L307.9,280.4 Z"/><path fill="#4a2e27" fill-opacity="0.93" d="M262.5,280.4 L262.5,283.3 A22.7 10.2 0 0 0 307.9,283.3 L307.9,280.4 Z"/><path fill="#000" fill-opacity="0.10" d="M262.5,280.4 L263.2,290 A22.7 10.2 0 0 0 273.5,298.5 L272.7,288.8 Z"/><path fill="#fff" fill-opacity="0.13" d="M307.9,280.4 L308.7,290 A22.7 10.2 0 0 1 304.1,296.1 L303.4,286.5 Z"/><ellipse cx="285.2" cy="280.4" rx="22.7" ry="10.2" fill="url(#stBt)" stroke="#140d10" stroke-width="0.8" stroke-opacity="0.6"/><ellipse cx="285.2" cy="280.7" rx="18.2" ry="8.1" fill="none" stroke="#2a1915" stroke-opacity="0.5" stroke-width="1.2"/><ellipse cx="285.2" cy="280.7" rx="11.4" ry="5.1" fill="none" stroke="#2a1915" stroke-opacity="0.5" stroke-width="1.4"/><ellipse cx="285.2" cy="280.7" rx="6.1" ry="2.7" fill="none" stroke="#2a1915" stroke-opacity="0.35" stroke-width="1.1"/><path d="M269.4,278.8 l-1.6,1.6 l1.6,1.6" fill="none" stroke="#b5a79c" stroke-opacity="0.55" stroke-width="0.9"/><path d="M276.2,278.8 l-1.6,1.6 l1.6,1.6" fill="none" stroke="#b5a79c" stroke-opacity="0.55" stroke-width="0.9"/><path d="M294.2,278.8 l1.6,1.6 l-1.6,1.6" fill="none" stroke="#b5a79c" stroke-opacity="0.55" stroke-width="0.9"/><path d="M301,278.8 l1.6,1.6 l-1.6,1.6" fill="none" stroke="#b5a79c" stroke-opacity="0.55" stroke-width="0.9"/>
<ellipse cx="387.8" cy="291" rx="23.5" ry="10.7" fill="#000" fill-opacity="0.25"/><path fill="url(#stB)" d="M364.1,280.4 L364.2,290 A22.7 10.2 0 0 0 409.7,290 L409.5,280.4 Z"/><path fill="#4a2e27" fill-opacity="0.93" d="M364.1,280.4 L364.1,283.3 A22.7 10.2 0 0 0 409.5,283.3 L409.5,280.4 Z"/><path fill="#000" fill-opacity="0.10" d="M364.1,280.4 L364.2,290 A22.7 10.2 0 0 0 374.5,298.5 L374.3,288.8 Z"/><path fill="#fff" fill-opacity="0.13" d="M409.5,280.4 L409.7,290 A22.7 10.2 0 0 1 405.1,296.1 L405,286.5 Z"/><ellipse cx="386.8" cy="280.4" rx="22.7" ry="10.2" fill="url(#stBt)" stroke="#140d10" stroke-width="0.8" stroke-opacity="0.6"/><ellipse cx="386.8" cy="280.7" rx="18.2" ry="8.1" fill="none" stroke="#2a1915" stroke-opacity="0.5" stroke-width="1.2"/><ellipse cx="386.8" cy="280.7" rx="11.4" ry="5.1" fill="none" stroke="#2a1915" stroke-opacity="0.5" stroke-width="1.4"/><ellipse cx="386.8" cy="280.7" rx="6.1" ry="2.7" fill="none" stroke="#2a1915" stroke-opacity="0.35" stroke-width="1.1"/><path d="M371,278.8 l-1.6,1.6 l1.6,1.6" fill="none" stroke="#b5a79c" stroke-opacity="0.55" stroke-width="0.9"/><path d="M377.8,278.8 l-1.6,1.6 l1.6,1.6" fill="none" stroke="#b5a79c" stroke-opacity="0.55" stroke-width="0.9"/><path d="M395.8,278.8 l1.6,1.6 l-1.6,1.6" fill="none" stroke="#b5a79c" stroke-opacity="0.55" stroke-width="0.9"/><path d="M402.6,278.8 l1.6,1.6 l-1.6,1.6" fill="none" stroke="#b5a79c" stroke-opacity="0.55" stroke-width="0.9"/>
<ellipse cx="488.7" cy="291" rx="23.5" ry="10.7" fill="#000" fill-opacity="0.25"/><path fill="url(#stB)" d="M465.7,280.4 L465.2,290 A22.7 10.2 0 0 0 510.7,290 L511.1,280.4 Z"/><path fill="#4a2e27" fill-opacity="0.93" d="M465.7,280.4 L465.7,283.3 A22.7 10.2 0 0 0 511.1,283.3 L511.1,280.4 Z"/><path fill="#000" fill-opacity="0.10" d="M465.7,280.4 L465.2,290 A22.7 10.2 0 0 0 475.4,298.5 L475.9,288.8 Z"/><path fill="#fff" fill-opacity="0.13" d="M511.1,280.4 L510.7,290 A22.7 10.2 0 0 1 506.1,296.1 L506.6,286.5 Z"/><ellipse cx="488.4" cy="280.4" rx="22.7" ry="10.2" fill="url(#stBt)" stroke="#140d10" stroke-width="0.8" stroke-opacity="0.6"/><ellipse cx="488.4" cy="280.7" rx="18.2" ry="8.1" fill="none" stroke="#2a1915" stroke-opacity="0.5" stroke-width="1.2"/><ellipse cx="488.4" cy="280.7" rx="11.4" ry="5.1" fill="none" stroke="#2a1915" stroke-opacity="0.5" stroke-width="1.4"/><ellipse cx="488.4" cy="280.7" rx="6.1" ry="2.7" fill="none" stroke="#2a1915" stroke-opacity="0.35" stroke-width="1.1"/><path d="M472.6,278.8 l-1.6,1.6 l1.6,1.6" fill="none" stroke="#b5a79c" stroke-opacity="0.55" stroke-width="0.9"/><path d="M479.4,278.8 l-1.6,1.6 l1.6,1.6" fill="none" stroke="#b5a79c" stroke-opacity="0.55" stroke-width="0.9"/><path d="M497.4,278.8 l1.6,1.6 l-1.6,1.6" fill="none" stroke="#b5a79c" stroke-opacity="0.55" stroke-width="0.9"/><path d="M504.2,278.8 l1.6,1.6 l-1.6,1.6" fill="none" stroke="#b5a79c" stroke-opacity="0.55" stroke-width="0.9"/>
<ellipse cx="230.4" cy="316.7" rx="24.4" ry="11.4" fill="#000" fill-opacity="0.25"/><path fill="url(#stB)" d="M205,306 L206.1,315.7 A23.6 10.9 0 0 0 253.2,315.7 L252.1,306 Z"/><path fill="#4a2e27" fill-opacity="0.93" d="M205,306 L205,308.9 A23.6 10.9 0 0 0 252.1,308.9 L252.1,306 Z"/><path fill="#000" fill-opacity="0.10" d="M205,306 L206.1,315.7 A23.6 10.9 0 0 0 216.7,324.8 L215.6,315.1 Z"/><path fill="#fff" fill-opacity="0.13" d="M252.1,306 L253.2,315.7 A23.6 10.9 0 0 1 248.5,322.3 L247.4,312.5 Z"/><ellipse cx="228.5" cy="306" rx="23.6" ry="10.9" fill="url(#stBt)" stroke="#140d10" stroke-width="0.8" stroke-opacity="0.6"/><ellipse cx="228.5" cy="306.3" rx="18.9" ry="8.8" fill="none" stroke="#2a1915" stroke-opacity="0.5" stroke-width="1.2"/><ellipse cx="228.5" cy="306.3" rx="11.8" ry="5.5" fill="none" stroke="#2a1915" stroke-opacity="0.5" stroke-width="1.4"/><ellipse cx="228.5" cy="306.3" rx="6.4" ry="3" fill="none" stroke="#2a1915" stroke-opacity="0.35" stroke-width="1.1"/><path d="M212.2,304.4 l-1.6,1.6 l1.6,1.6" fill="none" stroke="#b5a79c" stroke-opacity="0.55" stroke-width="0.9"/><path d="M219.3,304.4 l-1.6,1.6 l1.6,1.6" fill="none" stroke="#b5a79c" stroke-opacity="0.55" stroke-width="0.9"/><path d="M237.8,304.4 l1.6,1.6 l-1.6,1.6" fill="none" stroke="#b5a79c" stroke-opacity="0.55" stroke-width="0.9"/><path d="M244.9,304.4 l1.6,1.6 l-1.6,1.6" fill="none" stroke="#b5a79c" stroke-opacity="0.55" stroke-width="0.9"/>
<ellipse cx="334.8" cy="316.7" rx="24.4" ry="11.4" fill="#000" fill-opacity="0.25"/><path fill="url(#stB)" d="M309.9,306 L310.4,315.7 A23.6 10.9 0 0 0 357.5,315.7 L357.1,306 Z"/><path fill="#4a2e27" fill-opacity="0.93" d="M309.9,306 L309.9,308.9 A23.6 10.9 0 0 0 357.1,308.9 L357.1,306 Z"/><path fill="#000" fill-opacity="0.10" d="M309.9,306 L310.4,315.7 A23.6 10.9 0 0 0 321,324.8 L320.5,315.1 Z"/><path fill="#fff" fill-opacity="0.13" d="M357.1,306 L357.5,315.7 A23.6 10.9 0 0 1 352.8,322.3 L352.3,312.5 Z"/><ellipse cx="333.5" cy="306" rx="23.6" ry="10.9" fill="url(#stBt)" stroke="#140d10" stroke-width="0.8" stroke-opacity="0.6"/><ellipse cx="333.5" cy="306.3" rx="18.9" ry="8.8" fill="none" stroke="#2a1915" stroke-opacity="0.5" stroke-width="1.2"/><ellipse cx="333.5" cy="306.3" rx="11.8" ry="5.5" fill="none" stroke="#2a1915" stroke-opacity="0.5" stroke-width="1.4"/><ellipse cx="333.5" cy="306.3" rx="6.4" ry="3" fill="none" stroke="#2a1915" stroke-opacity="0.35" stroke-width="1.1"/><path d="M317.1,304.4 l-1.6,1.6 l1.6,1.6" fill="none" stroke="#b5a79c" stroke-opacity="0.55" stroke-width="0.9"/><path d="M324.2,304.4 l-1.6,1.6 l1.6,1.6" fill="none" stroke="#b5a79c" stroke-opacity="0.55" stroke-width="0.9"/><path d="M342.8,304.4 l1.6,1.6 l-1.6,1.6" fill="none" stroke="#b5a79c" stroke-opacity="0.55" stroke-width="0.9"/><path d="M349.8,304.4 l1.6,1.6 l-1.6,1.6" fill="none" stroke="#b5a79c" stroke-opacity="0.55" stroke-width="0.9"/>
<ellipse cx="439.1" cy="316.7" rx="24.4" ry="11.4" fill="#000" fill-opacity="0.25"/><path fill="url(#stB)" d="M414.9,306 L414.7,315.7 A23.6 10.9 0 0 0 461.9,315.7 L462,306 Z"/><path fill="#4a2e27" fill-opacity="0.93" d="M414.9,306 L414.9,308.9 A23.6 10.9 0 0 0 462,308.9 L462,306 Z"/><path fill="#000" fill-opacity="0.10" d="M414.9,306 L414.7,315.7 A23.6 10.9 0 0 0 425.3,324.8 L425.5,315.1 Z"/><path fill="#fff" fill-opacity="0.13" d="M462,306 L461.9,315.7 A23.6 10.9 0 0 1 457.1,322.3 L457.3,312.5 Z"/><ellipse cx="438.4" cy="306" rx="23.6" ry="10.9" fill="url(#stBt)" stroke="#140d10" stroke-width="0.8" stroke-opacity="0.6"/><ellipse cx="438.4" cy="306.3" rx="18.9" ry="8.8" fill="none" stroke="#2a1915" stroke-opacity="0.5" stroke-width="1.2"/><ellipse cx="438.4" cy="306.3" rx="11.8" ry="5.5" fill="none" stroke="#2a1915" stroke-opacity="0.5" stroke-width="1.4"/><ellipse cx="438.4" cy="306.3" rx="6.4" ry="3" fill="none" stroke="#2a1915" stroke-opacity="0.35" stroke-width="1.1"/><path d="M422.1,304.4 l-1.6,1.6 l1.6,1.6" fill="none" stroke="#b5a79c" stroke-opacity="0.55" stroke-width="0.9"/><path d="M429.1,304.4 l-1.6,1.6 l1.6,1.6" fill="none" stroke="#b5a79c" stroke-opacity="0.55" stroke-width="0.9"/><path d="M447.7,304.4 l1.6,1.6 l-1.6,1.6" fill="none" stroke="#b5a79c" stroke-opacity="0.55" stroke-width="0.9"/><path d="M454.8,304.4 l1.6,1.6 l-1.6,1.6" fill="none" stroke="#b5a79c" stroke-opacity="0.55" stroke-width="0.9"/>
<ellipse cx="543.4" cy="316.7" rx="24.4" ry="11.4" fill="#000" fill-opacity="0.25"/><path fill="url(#stB)" d="M519.8,306 L519,315.7 A23.6 10.9 0 0 0 566.2,315.7 L567,306 Z"/><path fill="#4a2e27" fill-opacity="0.93" d="M519.8,306 L519.8,308.9 A23.6 10.9 0 0 0 567,308.9 L567,306 Z"/><path fill="#000" fill-opacity="0.10" d="M519.8,306 L519,315.7 A23.6 10.9 0 0 0 529.6,324.8 L530.4,315.1 Z"/><path fill="#fff" fill-opacity="0.13" d="M567,306 L566.2,315.7 A23.6 10.9 0 0 1 561.5,322.3 L562.2,312.5 Z"/><ellipse cx="543.4" cy="306" rx="23.6" ry="10.9" fill="url(#stBt)" stroke="#140d10" stroke-width="0.8" stroke-opacity="0.6"/><ellipse cx="543.4" cy="306.3" rx="18.9" ry="8.8" fill="none" stroke="#2a1915" stroke-opacity="0.5" stroke-width="1.2"/><ellipse cx="543.4" cy="306.3" rx="11.8" ry="5.5" fill="none" stroke="#2a1915" stroke-opacity="0.5" stroke-width="1.4"/><ellipse cx="543.4" cy="306.3" rx="6.4" ry="3" fill="none" stroke="#2a1915" stroke-opacity="0.35" stroke-width="1.1"/><path d="M527,304.4 l-1.6,1.6 l1.6,1.6" fill="none" stroke="#b5a79c" stroke-opacity="0.55" stroke-width="0.9"/><path d="M534.1,304.4 l-1.6,1.6 l1.6,1.6" fill="none" stroke="#b5a79c" stroke-opacity="0.55" stroke-width="0.9"/><path d="M552.7,304.4 l1.6,1.6 l-1.6,1.6" fill="none" stroke="#b5a79c" stroke-opacity="0.55" stroke-width="0.9"/><path d="M559.7,304.4 l1.6,1.6 l-1.6,1.6" fill="none" stroke="#b5a79c" stroke-opacity="0.55" stroke-width="0.9"/>
<ellipse cx="170.3" cy="344.1" rx="25.3" ry="12.3" fill="#000" fill-opacity="0.25"/><path fill="url(#stB)" d="M143.5,333.3 L145,343.1 A24.5 11.8 0 0 0 194,343.1 L192.5,333.3 Z"/><path fill="#4a2e27" fill-opacity="0.93" d="M143.5,333.3 L143.5,336.3 A24.5 11.8 0 0 0 192.5,336.3 L192.5,333.3 Z"/><path fill="#000" fill-opacity="0.10" d="M143.5,333.3 L145,343.1 A24.5 11.8 0 0 0 156,352.9 L154.5,343.1 Z"/><path fill="#fff" fill-opacity="0.13" d="M192.5,333.3 L194,343.1 A24.5 11.8 0 0 1 189.1,350.2 L187.6,340.4 Z"/><ellipse cx="168" cy="333.3" rx="24.5" ry="11.8" fill="url(#stBt)" stroke="#140d10" stroke-width="0.8" stroke-opacity="0.6"/><ellipse cx="168" cy="333.6" rx="19.6" ry="9.5" fill="none" stroke="#2a1915" stroke-opacity="0.5" stroke-width="1.2"/><ellipse cx="168" cy="333.6" rx="12.2" ry="5.9" fill="none" stroke="#2a1915" stroke-opacity="0.5" stroke-width="1.4"/><ellipse cx="168" cy="333.6" rx="6.6" ry="3.2" fill="none" stroke="#2a1915" stroke-opacity="0.35" stroke-width="1.1"/><path d="M151,331.7 l-1.6,1.6 l1.6,1.6" fill="none" stroke="#b5a79c" stroke-opacity="0.55" stroke-width="0.9"/><path d="M158.4,331.7 l-1.6,1.6 l1.6,1.6" fill="none" stroke="#b5a79c" stroke-opacity="0.55" stroke-width="0.9"/><path d="M177.6,331.7 l1.6,1.6 l-1.6,1.6" fill="none" stroke="#b5a79c" stroke-opacity="0.55" stroke-width="0.9"/><path d="M185,331.7 l1.6,1.6 l-1.6,1.6" fill="none" stroke="#b5a79c" stroke-opacity="0.55" stroke-width="0.9"/>
<ellipse cx="601.8" cy="344.1" rx="25.3" ry="12.3" fill="#000" fill-opacity="0.25"/><path fill="url(#stB)" d="M577.6,333.3 L576.5,343.1 A24.5 11.8 0 0 0 625.5,343.1 L626.6,333.3 Z"/><path fill="#4a2e27" fill-opacity="0.93" d="M577.6,333.3 L577.6,336.3 A24.5 11.8 0 0 0 626.6,336.3 L626.6,333.3 Z"/><path fill="#000" fill-opacity="0.10" d="M577.6,333.3 L576.5,343.1 A24.5 11.8 0 0 0 587.5,352.9 L588.7,343.1 Z"/><path fill="#fff" fill-opacity="0.13" d="M626.6,333.3 L625.5,343.1 A24.5 11.8 0 0 1 620.6,350.2 L621.7,340.4 Z"/><ellipse cx="602.1" cy="333.3" rx="24.5" ry="11.8" fill="url(#stBt)" stroke="#140d10" stroke-width="0.8" stroke-opacity="0.6"/><ellipse cx="602.1" cy="333.6" rx="19.6" ry="9.5" fill="none" stroke="#2a1915" stroke-opacity="0.5" stroke-width="1.2"/><ellipse cx="602.1" cy="333.6" rx="12.2" ry="5.9" fill="none" stroke="#2a1915" stroke-opacity="0.5" stroke-width="1.4"/><ellipse cx="602.1" cy="333.6" rx="6.6" ry="3.2" fill="none" stroke="#2a1915" stroke-opacity="0.35" stroke-width="1.1"/><path d="M585.2,331.7 l-1.6,1.6 l1.6,1.6" fill="none" stroke="#b5a79c" stroke-opacity="0.55" stroke-width="0.9"/><path d="M592.5,331.7 l-1.6,1.6 l1.6,1.6" fill="none" stroke="#b5a79c" stroke-opacity="0.55" stroke-width="0.9"/><path d="M611.7,331.7 l1.6,1.6 l-1.6,1.6" fill="none" stroke="#b5a79c" stroke-opacity="0.55" stroke-width="0.9"/><path d="M619.1,331.7 l1.6,1.6 l-1.6,1.6" fill="none" stroke="#b5a79c" stroke-opacity="0.55" stroke-width="0.9"/>
<ellipse cx="202.7" cy="438.9" rx="28.4" ry="15.5" fill="#000" fill-opacity="0.25"/><path fill="url(#stY)" d="M173,427.9 L174.3,437.9 A27.6 15 0 0 0 229.5,437.9 L228.3,427.9 Z"/><path fill="#a0812b" fill-opacity="0.93" d="M173,427.9 L173,431.3 A27.6 15 0 0 0 228.3,431.3 L228.3,427.9 Z"/><path fill="#000" fill-opacity="0.10" d="M173,427.9 L174.3,437.9 A27.6 15 0 0 0 186.7,450.4 L185.4,440.4 Z"/><path fill="#fff" fill-opacity="0.13" d="M228.3,427.9 L229.5,437.9 A27.6 15 0 0 1 224,447 L222.7,436.9 Z"/><ellipse cx="200.6" cy="427.9" rx="27.6" ry="15" fill="url(#stYt)" stroke="#2a2260" stroke-width="0.8" stroke-opacity="0.6"/><ellipse cx="200.6" cy="428.2" rx="22.1" ry="12" fill="none" stroke="#7e600f" stroke-opacity="0.5" stroke-width="1.2"/><ellipse cx="200.6" cy="428.2" rx="17.7" ry="9.6" fill="none" stroke="#d0caac" stroke-opacity="0.32" stroke-width="1.5"/><ellipse cx="200.6" cy="428.2" rx="13.8" ry="7.5" fill="none" stroke="#7e600f" stroke-opacity="0.55" stroke-width="1.4"/><ellipse cx="200.6" cy="428.2" rx="7.5" ry="4.1" fill="none" stroke="#7e600f" stroke-opacity="0.35" stroke-width="1.1"/><path d="M181.6,426.3 l-1.6,1.6 l1.6,1.6" fill="none" stroke="#d0caac" stroke-opacity="0.55" stroke-width="0.9"/><path d="M189.9,426.3 l-1.6,1.6 l1.6,1.6" fill="none" stroke="#d0caac" stroke-opacity="0.55" stroke-width="0.9"/><path d="M211.4,426.3 l1.6,1.6 l-1.6,1.6" fill="none" stroke="#d0caac" stroke-opacity="0.55" stroke-width="0.9"/><path d="M219.7,426.3 l1.6,1.6 l-1.6,1.6" fill="none" stroke="#d0caac" stroke-opacity="0.55" stroke-width="0.9"/>
<ellipse cx="322.9" cy="438.9" rx="28.4" ry="15.5" fill="#000" fill-opacity="0.25"/><path fill="url(#stY)" d="M293.9,427.9 L294.4,437.9 A27.6 15 0 0 0 349.7,437.9 L349.2,427.9 Z"/><path fill="#a0812b" fill-opacity="0.93" d="M293.9,427.9 L293.9,431.3 A27.6 15 0 0 0 349.2,431.3 L349.2,427.9 Z"/><path fill="#000" fill-opacity="0.10" d="M293.9,427.9 L294.4,437.9 A27.6 15 0 0 0 306.9,450.4 L306.3,440.4 Z"/><path fill="#fff" fill-opacity="0.13" d="M349.2,427.9 L349.7,437.9 A27.6 15 0 0 1 344.2,447 L343.6,436.9 Z"/><ellipse cx="321.5" cy="427.9" rx="27.6" ry="15" fill="url(#stYt)" stroke="#2a2260" stroke-width="0.8" stroke-opacity="0.6"/><ellipse cx="321.5" cy="428.2" rx="22.1" ry="12" fill="none" stroke="#7e600f" stroke-opacity="0.5" stroke-width="1.2"/><ellipse cx="321.5" cy="428.2" rx="17.7" ry="9.6" fill="none" stroke="#d0caac" stroke-opacity="0.32" stroke-width="1.5"/><ellipse cx="321.5" cy="428.2" rx="13.8" ry="7.5" fill="none" stroke="#7e600f" stroke-opacity="0.55" stroke-width="1.4"/><ellipse cx="321.5" cy="428.2" rx="7.5" ry="4.1" fill="none" stroke="#7e600f" stroke-opacity="0.35" stroke-width="1.1"/><path d="M302.5,426.3 l-1.6,1.6 l1.6,1.6" fill="none" stroke="#d0caac" stroke-opacity="0.55" stroke-width="0.9"/><path d="M310.8,426.3 l-1.6,1.6 l1.6,1.6" fill="none" stroke="#d0caac" stroke-opacity="0.55" stroke-width="0.9"/><path d="M332.3,426.3 l1.6,1.6 l-1.6,1.6" fill="none" stroke="#d0caac" stroke-opacity="0.55" stroke-width="0.9"/><path d="M340.6,426.3 l1.6,1.6 l-1.6,1.6" fill="none" stroke="#d0caac" stroke-opacity="0.55" stroke-width="0.9"/>
<ellipse cx="131.9" cy="475.5" rx="29.7" ry="16.9" fill="#000" fill-opacity="0.25"/><path fill="url(#stY)" d="M100.6,464.4 L102.3,474.5 A28.9 16.4 0 0 0 160,474.5 L158.3,464.4 Z"/><path fill="#a0812b" fill-opacity="0.93" d="M100.6,464.4 L100.6,467.9 A28.9 16.4 0 0 0 158.3,467.9 L158.3,464.4 Z"/><path fill="#000" fill-opacity="0.10" d="M100.6,464.4 L102.3,474.5 A28.9 16.4 0 0 0 115.3,488.1 L113.6,478 Z"/><path fill="#fff" fill-opacity="0.13" d="M158.3,464.4 L160,474.5 A28.9 16.4 0 0 1 154.2,484.4 L152.5,474.3 Z"/><ellipse cx="129.5" cy="464.4" rx="28.9" ry="16.4" fill="url(#stYt)" stroke="#2a2260" stroke-width="0.8" stroke-opacity="0.6"/><ellipse cx="129.5" cy="464.7" rx="23.1" ry="13.1" fill="none" stroke="#7e600f" stroke-opacity="0.5" stroke-width="1.2"/><ellipse cx="129.5" cy="464.7" rx="18.5" ry="10.5" fill="none" stroke="#d0caac" stroke-opacity="0.32" stroke-width="1.5"/><ellipse cx="129.5" cy="464.7" rx="14.4" ry="8.2" fill="none" stroke="#7e600f" stroke-opacity="0.55" stroke-width="1.4"/><ellipse cx="129.5" cy="464.7" rx="7.8" ry="4.4" fill="none" stroke="#7e600f" stroke-opacity="0.35" stroke-width="1.1"/><path d="M109.6,462.8 l-1.6,1.6 l1.6,1.6" fill="none" stroke="#d0caac" stroke-opacity="0.55" stroke-width="0.9"/><path d="M118.3,462.8 l-1.6,1.6 l1.6,1.6" fill="none" stroke="#d0caac" stroke-opacity="0.55" stroke-width="0.9"/><path d="M140.6,462.8 l1.6,1.6 l-1.6,1.6" fill="none" stroke="#d0caac" stroke-opacity="0.55" stroke-width="0.9"/><path d="M149.3,462.8 l1.6,1.6 l-1.6,1.6" fill="none" stroke="#d0caac" stroke-opacity="0.55" stroke-width="0.9"/>
<ellipse cx="256.9" cy="475.5" rx="29.7" ry="16.9" fill="#000" fill-opacity="0.25"/><path fill="url(#stY)" d="M226.3,464.4 L227.2,474.5 A28.9 16.4 0 0 0 284.9,474.5 L284,464.4 Z"/><path fill="#a0812b" fill-opacity="0.93" d="M226.3,464.4 L226.3,467.9 A28.9 16.4 0 0 0 284,467.9 L284,464.4 Z"/><path fill="#000" fill-opacity="0.10" d="M226.3,464.4 L227.2,474.5 A28.9 16.4 0 0 0 240.2,488.1 L239.2,478 Z"/><path fill="#fff" fill-opacity="0.13" d="M284,464.4 L284.9,474.5 A28.9 16.4 0 0 1 279.1,484.4 L278.2,474.3 Z"/><ellipse cx="255.1" cy="464.4" rx="28.9" ry="16.4" fill="url(#stYt)" stroke="#2a2260" stroke-width="0.8" stroke-opacity="0.6"/><ellipse cx="255.1" cy="464.7" rx="23.1" ry="13.1" fill="none" stroke="#7e600f" stroke-opacity="0.5" stroke-width="1.2"/><ellipse cx="255.1" cy="464.7" rx="18.5" ry="10.5" fill="none" stroke="#d0caac" stroke-opacity="0.32" stroke-width="1.5"/><ellipse cx="255.1" cy="464.7" rx="14.4" ry="8.2" fill="none" stroke="#7e600f" stroke-opacity="0.55" stroke-width="1.4"/><ellipse cx="255.1" cy="464.7" rx="7.8" ry="4.4" fill="none" stroke="#7e600f" stroke-opacity="0.35" stroke-width="1.1"/><path d="M235.3,462.8 l-1.6,1.6 l1.6,1.6" fill="none" stroke="#d0caac" stroke-opacity="0.55" stroke-width="0.9"/><path d="M243.9,462.8 l-1.6,1.6 l1.6,1.6" fill="none" stroke="#d0caac" stroke-opacity="0.55" stroke-width="0.9"/><path d="M266.3,462.8 l1.6,1.6 l-1.6,1.6" fill="none" stroke="#d0caac" stroke-opacity="0.55" stroke-width="0.9"/><path d="M275,462.8 l1.6,1.6 l-1.6,1.6" fill="none" stroke="#d0caac" stroke-opacity="0.55" stroke-width="0.9"/>
<ellipse cx="381.8" cy="475.5" rx="29.7" ry="16.9" fill="#000" fill-opacity="0.25"/><path fill="url(#stY)" d="M351.9,464.4 L352.1,474.5 A28.9 16.4 0 0 0 409.8,474.5 L409.6,464.4 Z"/><path fill="#a0812b" fill-opacity="0.93" d="M351.9,464.4 L351.9,467.9 A28.9 16.4 0 0 0 409.6,467.9 L409.6,464.4 Z"/><path fill="#000" fill-opacity="0.10" d="M351.9,464.4 L352.1,474.5 A28.9 16.4 0 0 0 365.1,488.1 L364.9,478 Z"/><path fill="#fff" fill-opacity="0.13" d="M409.6,464.4 L409.8,474.5 A28.9 16.4 0 0 1 404.1,484.4 L403.9,474.3 Z"/><ellipse cx="380.8" cy="464.4" rx="28.9" ry="16.4" fill="url(#stYt)" stroke="#2a2260" stroke-width="0.8" stroke-opacity="0.6"/><ellipse cx="380.8" cy="464.7" rx="23.1" ry="13.1" fill="none" stroke="#7e600f" stroke-opacity="0.5" stroke-width="1.2"/><ellipse cx="380.8" cy="464.7" rx="18.5" ry="10.5" fill="none" stroke="#d0caac" stroke-opacity="0.32" stroke-width="1.5"/><ellipse cx="380.8" cy="464.7" rx="14.4" ry="8.2" fill="none" stroke="#7e600f" stroke-opacity="0.55" stroke-width="1.4"/><ellipse cx="380.8" cy="464.7" rx="7.8" ry="4.4" fill="none" stroke="#7e600f" stroke-opacity="0.35" stroke-width="1.1"/><path d="M360.9,462.8 l-1.6,1.6 l1.6,1.6" fill="none" stroke="#d0caac" stroke-opacity="0.55" stroke-width="0.9"/><path d="M369.6,462.8 l-1.6,1.6 l1.6,1.6" fill="none" stroke="#d0caac" stroke-opacity="0.55" stroke-width="0.9"/><path d="M392,462.8 l1.6,1.6 l-1.6,1.6" fill="none" stroke="#d0caac" stroke-opacity="0.55" stroke-width="0.9"/><path d="M400.6,462.8 l1.6,1.6 l-1.6,1.6" fill="none" stroke="#d0caac" stroke-opacity="0.55" stroke-width="0.9"/>
<ellipse cx="631.6" cy="475.5" rx="29.7" ry="16.9" fill="#000" fill-opacity="0.25"/><path fill="url(#stY)" d="M603.3,464.4 L601.9,474.5 A28.9 16.4 0 0 0 659.7,474.5 L661,464.4 Z"/><path fill="#a0812b" fill-opacity="0.93" d="M603.3,464.4 L603.3,467.9 A28.9 16.4 0 0 0 661,467.9 L661,464.4 Z"/><path fill="#000" fill-opacity="0.10" d="M603.3,464.4 L601.9,474.5 A28.9 16.4 0 0 0 614.9,488.1 L616.2,478 Z"/><path fill="#fff" fill-opacity="0.13" d="M661,464.4 L659.7,474.5 A28.9 16.4 0 0 1 653.9,484.4 L655.2,474.3 Z"/><ellipse cx="632.1" cy="464.4" rx="28.9" ry="16.4" fill="url(#stYt)" stroke="#2a2260" stroke-width="0.8" stroke-opacity="0.6"/><ellipse cx="632.1" cy="464.7" rx="23.1" ry="13.1" fill="none" stroke="#7e600f" stroke-opacity="0.5" stroke-width="1.2"/><ellipse cx="632.1" cy="464.7" rx="18.5" ry="10.5" fill="none" stroke="#d0caac" stroke-opacity="0.32" stroke-width="1.5"/><ellipse cx="632.1" cy="464.7" rx="14.4" ry="8.2" fill="none" stroke="#7e600f" stroke-opacity="0.55" stroke-width="1.4"/><ellipse cx="632.1" cy="464.7" rx="7.8" ry="4.4" fill="none" stroke="#7e600f" stroke-opacity="0.35" stroke-width="1.1"/><path d="M612.3,462.8 l-1.6,1.6 l1.6,1.6" fill="none" stroke="#d0caac" stroke-opacity="0.55" stroke-width="0.9"/><path d="M620.9,462.8 l-1.6,1.6 l1.6,1.6" fill="none" stroke="#d0caac" stroke-opacity="0.55" stroke-width="0.9"/><path d="M643.3,462.8 l1.6,1.6 l-1.6,1.6" fill="none" stroke="#d0caac" stroke-opacity="0.55" stroke-width="0.9"/><path d="M652,462.8 l1.6,1.6 l-1.6,1.6" fill="none" stroke="#d0caac" stroke-opacity="0.55" stroke-width="0.9"/>
<ellipse cx="315.5" cy="515.1" rx="31" ry="18.4" fill="#000" fill-opacity="0.25"/><path fill="url(#stY)" d="M283.9,504 L284.5,514.1 A30.2 17.9 0 0 0 344.8,514.1 L344.2,504 Z"/><path fill="#a0812b" fill-opacity="0.93" d="M283.9,504 L283.9,507.4 A30.2 17.9 0 0 0 344.2,507.4 L344.2,504 Z"/><path fill="#000" fill-opacity="0.10" d="M283.9,504 L284.5,514.1 A30.2 17.9 0 0 0 298.1,529 L297.5,518.8 Z"/><path fill="#fff" fill-opacity="0.13" d="M344.2,504 L344.8,514.1 A30.2 17.9 0 0 1 338.8,524.9 L338.2,514.7 Z"/><ellipse cx="314.1" cy="504" rx="30.2" ry="17.9" fill="url(#stYt)" stroke="#2a2260" stroke-width="0.8" stroke-opacity="0.6"/><ellipse cx="314.1" cy="504.3" rx="24.1" ry="14.3" fill="none" stroke="#7e600f" stroke-opacity="0.5" stroke-width="1.2"/><ellipse cx="314.1" cy="504.3" rx="19.3" ry="11.5" fill="none" stroke="#d0caac" stroke-opacity="0.32" stroke-width="1.5"/><ellipse cx="314.1" cy="504.3" rx="15.1" ry="9" fill="none" stroke="#7e600f" stroke-opacity="0.55" stroke-width="1.4"/><ellipse cx="314.1" cy="504.3" rx="8.1" ry="4.8" fill="none" stroke="#7e600f" stroke-opacity="0.35" stroke-width="1.1"/><path d="M293.4,502.4 l-1.6,1.6 l1.6,1.6" fill="none" stroke="#d0caac" stroke-opacity="0.55" stroke-width="0.9"/><path d="M302.4,502.4 l-1.6,1.6 l1.6,1.6" fill="none" stroke="#d0caac" stroke-opacity="0.55" stroke-width="0.9"/><path d="M325.7,502.4 l1.6,1.6 l-1.6,1.6" fill="none" stroke="#d0caac" stroke-opacity="0.55" stroke-width="0.9"/><path d="M334.8,502.4 l1.6,1.6 l-1.6,1.6" fill="none" stroke="#d0caac" stroke-opacity="0.55" stroke-width="0.9"/>
<ellipse cx="445.5" cy="515.1" rx="31" ry="18.4" fill="#000" fill-opacity="0.25"/><path fill="url(#stY)" d="M414.7,504 L414.5,514.1 A30.2 17.9 0 0 0 474.9,514.1 L475.1,504 Z"/><path fill="#a0812b" fill-opacity="0.93" d="M414.7,504 L414.7,507.4 A30.2 17.9 0 0 0 475.1,507.4 L475.1,504 Z"/><path fill="#000" fill-opacity="0.10" d="M414.7,504 L414.5,514.1 A30.2 17.9 0 0 0 428.1,529 L428.3,518.8 Z"/><path fill="#fff" fill-opacity="0.13" d="M475.1,504 L474.9,514.1 A30.2 17.9 0 0 1 468.8,524.9 L469,514.7 Z"/><ellipse cx="444.9" cy="504" rx="30.2" ry="17.9" fill="url(#stYt)" stroke="#2a2260" stroke-width="0.8" stroke-opacity="0.6"/><ellipse cx="444.9" cy="504.3" rx="24.1" ry="14.3" fill="none" stroke="#7e600f" stroke-opacity="0.5" stroke-width="1.2"/><ellipse cx="444.9" cy="504.3" rx="19.3" ry="11.5" fill="none" stroke="#d0caac" stroke-opacity="0.32" stroke-width="1.5"/><ellipse cx="444.9" cy="504.3" rx="15.1" ry="9" fill="none" stroke="#7e600f" stroke-opacity="0.55" stroke-width="1.4"/><ellipse cx="444.9" cy="504.3" rx="8.1" ry="4.8" fill="none" stroke="#7e600f" stroke-opacity="0.35" stroke-width="1.1"/><path d="M424.2,502.4 l-1.6,1.6 l1.6,1.6" fill="none" stroke="#d0caac" stroke-opacity="0.55" stroke-width="0.9"/><path d="M433.2,502.4 l-1.6,1.6 l1.6,1.6" fill="none" stroke="#d0caac" stroke-opacity="0.55" stroke-width="0.9"/><path d="M456.6,502.4 l1.6,1.6 l-1.6,1.6" fill="none" stroke="#d0caac" stroke-opacity="0.55" stroke-width="0.9"/><path d="M465.6,502.4 l1.6,1.6 l-1.6,1.6" fill="none" stroke="#d0caac" stroke-opacity="0.55" stroke-width="0.9"/>
<ellipse cx="575.6" cy="515.1" rx="31" ry="18.4" fill="#000" fill-opacity="0.25"/><path fill="url(#stY)" d="M545.6,504 L544.6,514.1 A30.2 17.9 0 0 0 604.9,514.1 L605.9,504 Z"/><path fill="#a0812b" fill-opacity="0.93" d="M545.6,504 L545.6,507.4 A30.2 17.9 0 0 0 605.9,507.4 L605.9,504 Z"/><path fill="#000" fill-opacity="0.10" d="M545.6,504 L544.6,514.1 A30.2 17.9 0 0 0 558.2,529 L559.1,518.8 Z"/><path fill="#fff" fill-opacity="0.13" d="M605.9,504 L604.9,514.1 A30.2 17.9 0 0 1 598.9,524.9 L599.9,514.7 Z"/><ellipse cx="575.7" cy="504" rx="30.2" ry="17.9" fill="url(#stYt)" stroke="#2a2260" stroke-width="0.8" stroke-opacity="0.6"/><ellipse cx="575.7" cy="504.3" rx="24.1" ry="14.3" fill="none" stroke="#7e600f" stroke-opacity="0.5" stroke-width="1.2"/><ellipse cx="575.7" cy="504.3" rx="19.3" ry="11.5" fill="none" stroke="#d0caac" stroke-opacity="0.32" stroke-width="1.5"/><ellipse cx="575.7" cy="504.3" rx="15.1" ry="9" fill="none" stroke="#7e600f" stroke-opacity="0.55" stroke-width="1.4"/><ellipse cx="575.7" cy="504.3" rx="8.1" ry="4.8" fill="none" stroke="#7e600f" stroke-opacity="0.35" stroke-width="1.1"/><path d="M555,502.4 l-1.6,1.6 l1.6,1.6" fill="none" stroke="#d0caac" stroke-opacity="0.55" stroke-width="0.9"/><path d="M564.1,502.4 l-1.6,1.6 l1.6,1.6" fill="none" stroke="#d0caac" stroke-opacity="0.55" stroke-width="0.9"/><path d="M587.4,502.4 l1.6,1.6 l-1.6,1.6" fill="none" stroke="#d0caac" stroke-opacity="0.55" stroke-width="0.9"/><path d="M596.5,502.4 l1.6,1.6 l-1.6,1.6" fill="none" stroke="#d0caac" stroke-opacity="0.55" stroke-width="0.9"/>
<ellipse cx="107.8" cy="558.1" rx="32.4" ry="20.2" fill="#000" fill-opacity="0.25"/><path fill="url(#stY)" d="M73.6,546.9 L75.4,557.1 A31.6 19.7 0 0 0 138.6,557.1 L136.8,546.9 Z"/><path fill="#a0812b" fill-opacity="0.93" d="M73.6,546.9 L73.6,550.4 A31.6 19.7 0 0 0 136.8,550.4 L136.8,546.9 Z"/><path fill="#000" fill-opacity="0.10" d="M73.6,546.9 L75.4,557.1 A31.6 19.7 0 0 0 89.7,573.4 L87.8,563.2 Z"/><path fill="#fff" fill-opacity="0.13" d="M136.8,546.9 L138.6,557.1 A31.6 19.7 0 0 1 132.3,568.9 L130.5,558.7 Z"/><ellipse cx="105.2" cy="546.9" rx="31.6" ry="19.7" fill="url(#stYt)" stroke="#2a2260" stroke-width="0.8" stroke-opacity="0.6"/><ellipse cx="105.2" cy="547.2" rx="25.3" ry="15.7" fill="none" stroke="#7e600f" stroke-opacity="0.5" stroke-width="1.2"/><ellipse cx="105.2" cy="547.2" rx="20.2" ry="12.6" fill="none" stroke="#d0caac" stroke-opacity="0.32" stroke-width="1.5"/><ellipse cx="105.2" cy="547.2" rx="15.8" ry="9.8" fill="none" stroke="#7e600f" stroke-opacity="0.55" stroke-width="1.4"/><ellipse cx="105.2" cy="547.2" rx="8.5" ry="5.3" fill="none" stroke="#7e600f" stroke-opacity="0.35" stroke-width="1.1"/><path d="M83.6,545.3 l-1.6,1.6 l1.6,1.6" fill="none" stroke="#d0caac" stroke-opacity="0.55" stroke-width="0.9"/><path d="M93,545.3 l-1.6,1.6 l1.6,1.6" fill="none" stroke="#d0caac" stroke-opacity="0.55" stroke-width="0.9"/><path d="M117.4,545.3 l1.6,1.6 l-1.6,1.6" fill="none" stroke="#d0caac" stroke-opacity="0.55" stroke-width="0.9"/><path d="M126.9,545.3 l1.6,1.6 l-1.6,1.6" fill="none" stroke="#d0caac" stroke-opacity="0.55" stroke-width="0.9"/>
<ellipse cx="243.5" cy="558.1" rx="32.4" ry="20.2" fill="#000" fill-opacity="0.25"/><path fill="url(#stY)" d="M210.1,546.9 L211.1,557.1 A31.6 19.7 0 0 0 274.3,557.1 L273.3,546.9 Z"/><path fill="#a0812b" fill-opacity="0.93" d="M210.1,546.9 L210.1,550.4 A31.6 19.7 0 0 0 273.3,550.4 L273.3,546.9 Z"/><path fill="#000" fill-opacity="0.10" d="M210.1,546.9 L211.1,557.1 A31.6 19.7 0 0 0 225.3,573.4 L224.3,563.2 Z"/><path fill="#fff" fill-opacity="0.13" d="M273.3,546.9 L274.3,557.1 A31.6 19.7 0 0 1 268,568.9 L266.9,558.7 Z"/><ellipse cx="241.7" cy="546.9" rx="31.6" ry="19.7" fill="url(#stYt)" stroke="#2a2260" stroke-width="0.8" stroke-opacity="0.6"/><ellipse cx="241.7" cy="547.2" rx="25.3" ry="15.7" fill="none" stroke="#7e600f" stroke-opacity="0.5" stroke-width="1.2"/><ellipse cx="241.7" cy="547.2" rx="20.2" ry="12.6" fill="none" stroke="#d0caac" stroke-opacity="0.32" stroke-width="1.5"/><ellipse cx="241.7" cy="547.2" rx="15.8" ry="9.8" fill="none" stroke="#7e600f" stroke-opacity="0.55" stroke-width="1.4"/><ellipse cx="241.7" cy="547.2" rx="8.5" ry="5.3" fill="none" stroke="#7e600f" stroke-opacity="0.35" stroke-width="1.1"/><path d="M220,545.3 l-1.6,1.6 l1.6,1.6" fill="none" stroke="#d0caac" stroke-opacity="0.55" stroke-width="0.9"/><path d="M229.5,545.3 l-1.6,1.6 l1.6,1.6" fill="none" stroke="#d0caac" stroke-opacity="0.55" stroke-width="0.9"/><path d="M253.8,545.3 l1.6,1.6 l-1.6,1.6" fill="none" stroke="#d0caac" stroke-opacity="0.55" stroke-width="0.9"/><path d="M263.3,545.3 l1.6,1.6 l-1.6,1.6" fill="none" stroke="#d0caac" stroke-opacity="0.55" stroke-width="0.9"/>
<ellipse cx="379.1" cy="558.1" rx="32.4" ry="20.2" fill="#000" fill-opacity="0.25"/><path fill="url(#stY)" d="M346.5,546.9 L346.7,557.1 A31.6 19.7 0 0 0 409.9,557.1 L409.7,546.9 Z"/><path fill="#a0812b" fill-opacity="0.93" d="M346.5,546.9 L346.5,550.4 A31.6 19.7 0 0 0 409.7,550.4 L409.7,546.9 Z"/><path fill="#000" fill-opacity="0.10" d="M346.5,546.9 L346.7,557.1 A31.6 19.7 0 0 0 360.9,573.4 L360.7,563.2 Z"/><path fill="#fff" fill-opacity="0.13" d="M409.7,546.9 L409.9,557.1 A31.6 19.7 0 0 1 403.6,568.9 L403.4,558.7 Z"/><ellipse cx="378.1" cy="546.9" rx="31.6" ry="19.7" fill="url(#stYt)" stroke="#2a2260" stroke-width="0.8" stroke-opacity="0.6"/><ellipse cx="378.1" cy="547.2" rx="25.3" ry="15.7" fill="none" stroke="#7e600f" stroke-opacity="0.5" stroke-width="1.2"/><ellipse cx="378.1" cy="547.2" rx="20.2" ry="12.6" fill="none" stroke="#d0caac" stroke-opacity="0.32" stroke-width="1.5"/><ellipse cx="378.1" cy="547.2" rx="15.8" ry="9.8" fill="none" stroke="#7e600f" stroke-opacity="0.55" stroke-width="1.4"/><ellipse cx="378.1" cy="547.2" rx="8.5" ry="5.3" fill="none" stroke="#7e600f" stroke-opacity="0.35" stroke-width="1.1"/><path d="M356.4,545.3 l-1.6,1.6 l1.6,1.6" fill="none" stroke="#d0caac" stroke-opacity="0.55" stroke-width="0.9"/><path d="M365.9,545.3 l-1.6,1.6 l1.6,1.6" fill="none" stroke="#d0caac" stroke-opacity="0.55" stroke-width="0.9"/><path d="M390.3,545.3 l1.6,1.6 l-1.6,1.6" fill="none" stroke="#d0caac" stroke-opacity="0.55" stroke-width="0.9"/><path d="M399.7,545.3 l1.6,1.6 l-1.6,1.6" fill="none" stroke="#d0caac" stroke-opacity="0.55" stroke-width="0.9"/>
<ellipse cx="514.7" cy="558.1" rx="32.4" ry="20.2" fill="#000" fill-opacity="0.25"/><path fill="url(#stY)" d="M482.9,546.9 L482.3,557.1 A31.6 19.7 0 0 0 545.5,557.1 L546.1,546.9 Z"/><path fill="#a0812b" fill-opacity="0.93" d="M482.9,546.9 L482.9,550.4 A31.6 19.7 0 0 0 546.1,550.4 L546.1,546.9 Z"/><path fill="#000" fill-opacity="0.10" d="M482.9,546.9 L482.3,557.1 A31.6 19.7 0 0 0 496.5,573.4 L497.1,563.2 Z"/><path fill="#fff" fill-opacity="0.13" d="M546.1,546.9 L545.5,557.1 A31.6 19.7 0 0 1 539.2,568.9 L539.8,558.7 Z"/><ellipse cx="514.5" cy="546.9" rx="31.6" ry="19.7" fill="url(#stYt)" stroke="#2a2260" stroke-width="0.8" stroke-opacity="0.6"/><ellipse cx="514.5" cy="547.2" rx="25.3" ry="15.7" fill="none" stroke="#7e600f" stroke-opacity="0.5" stroke-width="1.2"/><ellipse cx="514.5" cy="547.2" rx="20.2" ry="12.6" fill="none" stroke="#d0caac" stroke-opacity="0.32" stroke-width="1.5"/><ellipse cx="514.5" cy="547.2" rx="15.8" ry="9.8" fill="none" stroke="#7e600f" stroke-opacity="0.55" stroke-width="1.4"/><ellipse cx="514.5" cy="547.2" rx="8.5" ry="5.3" fill="none" stroke="#7e600f" stroke-opacity="0.35" stroke-width="1.1"/><path d="M492.9,545.3 l-1.6,1.6 l1.6,1.6" fill="none" stroke="#d0caac" stroke-opacity="0.55" stroke-width="0.9"/><path d="M502.4,545.3 l-1.6,1.6 l1.6,1.6" fill="none" stroke="#d0caac" stroke-opacity="0.55" stroke-width="0.9"/><path d="M526.7,545.3 l1.6,1.6 l-1.6,1.6" fill="none" stroke="#d0caac" stroke-opacity="0.55" stroke-width="0.9"/><path d="M536.2,545.3 l1.6,1.6 l-1.6,1.6" fill="none" stroke="#d0caac" stroke-opacity="0.55" stroke-width="0.9"/>
<ellipse cx="650.3" cy="558.1" rx="32.4" ry="20.2" fill="#000" fill-opacity="0.25"/><path fill="url(#stY)" d="M619.4,546.9 L617.9,557.1 A31.6 19.7 0 0 0 681.1,557.1 L682.6,546.9 Z"/><path fill="#a0812b" fill-opacity="0.93" d="M619.4,546.9 L619.4,550.4 A31.6 19.7 0 0 0 682.6,550.4 L682.6,546.9 Z"/><path fill="#000" fill-opacity="0.10" d="M619.4,546.9 L617.9,557.1 A31.6 19.7 0 0 0 632.2,573.4 L633.6,563.2 Z"/><path fill="#fff" fill-opacity="0.13" d="M682.6,546.9 L681.1,557.1 A31.6 19.7 0 0 1 674.8,568.9 L676.2,558.7 Z"/><ellipse cx="651" cy="546.9" rx="31.6" ry="19.7" fill="url(#stYt)" stroke="#2a2260" stroke-width="0.8" stroke-opacity="0.6"/><ellipse cx="651" cy="547.2" rx="25.3" ry="15.7" fill="none" stroke="#7e600f" stroke-opacity="0.5" stroke-width="1.2"/><ellipse cx="651" cy="547.2" rx="20.2" ry="12.6" fill="none" stroke="#d0caac" stroke-opacity="0.32" stroke-width="1.5"/><ellipse cx="651" cy="547.2" rx="15.8" ry="9.8" fill="none" stroke="#7e600f" stroke-opacity="0.55" stroke-width="1.4"/><ellipse cx="651" cy="547.2" rx="8.5" ry="5.3" fill="none" stroke="#7e600f" stroke-opacity="0.35" stroke-width="1.1"/><path d="M629.3,545.3 l-1.6,1.6 l1.6,1.6" fill="none" stroke="#d0caac" stroke-opacity="0.55" stroke-width="0.9"/><path d="M638.8,545.3 l-1.6,1.6 l1.6,1.6" fill="none" stroke="#d0caac" stroke-opacity="0.55" stroke-width="0.9"/><path d="M663.1,545.3 l1.6,1.6 l-1.6,1.6" fill="none" stroke="#d0caac" stroke-opacity="0.55" stroke-width="0.9"/><path d="M672.6,545.3 l1.6,1.6 l-1.6,1.6" fill="none" stroke="#d0caac" stroke-opacity="0.55" stroke-width="0.9"/>
<line x1="284.1" y1="504.6" x2="313.7" y2="504.6" stroke="#8a7282" stroke-width="0.9"/>
<line x1="103" y1="547.5" x2="133.8" y2="547.5" stroke="#8a7a72" stroke-width="0.9"/>
<line x1="571.2" y1="333.3" x2="626.6" y2="333.3" stroke="#a89a86" stroke-width="0.9"/>
</g></svg>
<div class="vt" style="left:16px;top:107px;font-size:16px;-webkit-text-stroke:0.3px #1fbb2b;color:#1fbb2b" id="t1">À vd de jouer...</div>
<svg class="ico" style="left:622px;top:112px" width="26" height="28" viewBox="622 112 26 28">
<defs><radialGradient id="pg" cx="0.5" cy="0.3" r="0.75"><stop offset="0" stop-color="#ffb4b4"/><stop offset="0.42" stop-color="#ff3030"/><stop offset="1" stop-color="#f40c0c"/></radialGradient></defs>
<ellipse cx="635.6" cy="137.4" rx="9" ry="1.6" fill="#e00" fill-opacity="0.14"/>
<circle cx="635.6" cy="125.2" r="11.6" fill="url(#pg)" stroke="#f06060" stroke-width="0.8"/>
<path d="M631.2,121.4 A6.2 6.2 0 1 0 640,121.4" fill="none" stroke="#fff" stroke-width="2" stroke-linecap="round"/>
<path d="M635.6,118.6 V125.6" stroke="#fff" stroke-width="2" stroke-linecap="round"/>
</svg>
<div class="vt" style="left:652px;top:109px;font-size:13px;line-height:16px;color:#111;-webkit-text-stroke:0.3px #111" id="t2">Jeu automatique sauvegardé<br>Partie en cours 1/2</div>
<div class="vt" style="left:672px;top:661px;font-size:15.5px;-webkit-text-stroke:0.35px #1a00c8;color:#1a00c8" id="t3">Motorisé par libm3d</div>
<div class="abs" style="left:821px;top:101px;width:1px;height:750px;background:#c9c6c3"></div>
<div class="wh lt" style="left:822px;top:101px;width:419px;height:222px">
<span style="left:1.3px;top:-6.8px">14</span>
<span style="left:23.9px;top:-6.8px">-0,08</span>
<span style="left:60.8px;top:-6.8px">40-34</span>
<span style="left:102.5px;top:-6.8px">14-19</span>
<span style="left:170.5px;top:-6.8px">2&quot;00</span>
<span style="left:207.5px;top:-6.8px">2873336</span>
<span style="left:269.0px;top:-6.8px">1437768</span>
<span style="left:327.1px;top:-6.8px">40,9</span>
<span style="left:360.3px;top:-6.8px">14</span>
<span style="left:380.8px;top:-6.8px">10/12</span>
<span style="left:1.3px;top:8.2px">14</span>
<span style="left:23.9px;top:8.2px">-0,08</span>
<span style="left:60.8px;top:8.2px">40-34</span>
<span style="left:102.5px;top:8.2px">14-19</span>
<span style="left:170.5px;top:8.2px">2&quot;00</span>
<span style="left:207.5px;top:8.2px">2892740</span>
<span style="left:269.0px;top:8.2px">1446370</span>
<span style="left:327.1px;top:8.2px">41,0</span>
<span style="left:360.3px;top:8.2px">14</span>
<span style="left:380.8px;top:8.2px">11/12</span>
<span style="left:1.3px;top:23.3px">14</span>
<span style="left:23.9px;top:23.3px">-0,08</span>
<span style="left:60.8px;top:23.3px">40-34</span>
<span style="left:102.5px;top:23.3px">14-19</span>
<span style="left:170.5px;top:23.3px">2&quot;00</span>
<span style="left:207.5px;top:23.3px">2899863</span>
<span style="left:269.0px;top:23.3px">1449932</span>
<span style="left:327.1px;top:23.3px">41,1</span>
<span style="left:360.3px;top:23.3px">14</span>
<span style="left:380.8px;top:23.3px">12/12</span>
<span style="left:1.3px;top:38.3px">14</span>
<span style="left:23.9px;top:38.3px">-0,08</span>
<span style="left:60.8px;top:38.3px">40-34</span>
<span style="left:102.5px;top:38.3px">14-19</span>
<span style="left:170.5px;top:38.3px">2&quot;00</span>
<span style="left:207.5px;top:38.3px">2910104</span>
<span style="left:269.0px;top:38.3px">1455052</span>
<span style="left:327.1px;top:38.3px">41,1</span>
<span style="left:360.3px;top:38.3px">15</span>
<span style="left:385.2px;top:38.3px">1/12</span>
<span style="left:417.0px;top:38.3px">·</span>
<span style="left:1.3px;top:53.4px">15</span>
<span style="left:23.9px;top:53.4px">+0,01</span>
<span style="left:64.6px;top:53.4px">40-34</span>
<span style="left:106.6px;top:53.4px">11-17</span>
<span style="left:175.0px;top:53.4px">3&quot;00</span>
<span style="left:211.6px;top:53.4px">3552683</span>
<span style="left:272.4px;top:53.4px">1184228</span>
<span style="left:330.5px;top:53.4px">39,6</span>
<span style="left:364.7px;top:53.4px">15</span>
<span style="left:386.9px;top:53.4px">2/12</span>
<span style="left:1.3px;top:68.4px">15</span>
<span style="left:23.9px;top:68.4px">+0,01</span>
<span style="left:64.6px;top:68.4px">40-34</span>
<span style="left:106.6px;top:68.4px">11-17</span>
<span style="left:175.0px;top:68.4px">3&quot;00</span>
<span style="left:211.6px;top:68.4px">3670819</span>
<span style="left:272.4px;top:68.4px">1223606</span>
<span style="left:330.5px;top:68.4px">39,6</span>
<span style="left:364.7px;top:68.4px">15</span>
<span style="left:386.9px;top:68.4px">3/12</span>
<span style="left:1.3px;top:83.5px">15</span>
<span style="left:23.9px;top:83.5px">+0,01</span>
<span style="left:64.6px;top:83.5px">40-34</span>
<span style="left:106.6px;top:83.5px">11-17</span>
<span style="left:175.0px;top:83.5px">3&quot;00</span>
<span style="left:211.6px;top:83.5px">3783941</span>
<span style="left:272.4px;top:83.5px">1261314</span>
<span style="left:330.5px;top:83.5px">39,9</span>
<span style="left:364.7px;top:83.5px">15</span>
<span style="left:386.9px;top:83.5px">4/12</span>
<span style="left:1.3px;top:98.5px">15</span>
<span style="left:23.9px;top:98.5px">+0,01</span>
<span style="left:64.6px;top:98.5px">40-34</span>
<span style="left:106.6px;top:98.5px">11-17</span>
<span style="left:175.0px;top:98.5px">3&quot;00</span>
<span style="left:211.6px;top:98.5px">3855599</span>
<span style="left:272.4px;top:98.5px">1285200</span>
<span style="left:330.5px;top:98.5px">40,1</span>
<span style="left:364.7px;top:98.5px">15</span>
<span style="left:386.9px;top:98.5px">5/12</span>
<span style="left:1.3px;top:113.6px">15</span>
<span style="left:23.9px;top:113.6px">+0,01</span>
<span style="left:64.6px;top:113.6px">40-34</span>
<span style="left:106.6px;top:113.6px">11-17</span>
<span style="left:175.0px;top:113.6px">3&quot;00</span>
<span style="left:211.6px;top:113.6px">3955631</span>
<span style="left:272.4px;top:113.6px">1318544</span>
<span style="left:330.5px;top:113.6px">40,3</span>
<span style="left:364.7px;top:113.6px">15</span>
<span style="left:386.9px;top:113.6px">6/12</span>
<span style="left:1.3px;top:128.6px">15</span>
<span style="left:23.9px;top:128.6px">+0,01</span>
<span style="left:64.6px;top:128.6px">40-34</span>
<span style="left:106.6px;top:128.6px">11-17</span>
<span style="left:175.0px;top:128.6px">3&quot;00</span>
<span style="left:211.6px;top:128.6px">4110253</span>
<span style="left:272.4px;top:128.6px">1370084</span>
<span style="left:330.5px;top:128.6px">40,5</span>
<span style="left:364.7px;top:128.6px">15</span>
<span style="left:386.9px;top:128.6px">7/12</span>
<span style="left:1.3px;top:143.7px">15</span>
<span style="left:23.9px;top:143.7px">+0,01</span>
<span style="left:64.6px;top:143.7px">40-34</span>
<span style="left:106.6px;top:143.7px">11-17</span>
<span style="left:175.0px;top:143.7px">3&quot;00</span>
<span style="left:211.6px;top:143.7px">4211837</span>
<span style="left:272.4px;top:143.7px">1403946</span>
<span style="left:330.5px;top:143.7px">40,7</span>
<span style="left:364.7px;top:143.7px">15</span>
<span style="left:386.9px;top:143.7px">8/12</span>
<span style="left:1.3px;top:158.7px">15</span>
<span style="left:23.9px;top:158.7px">+0,01</span>
<span style="left:64.6px;top:158.7px">40-34</span>
<span style="left:106.6px;top:158.7px">11-17</span>
<span style="left:175.0px;top:158.7px">4&quot;00</span>
<span style="left:211.6px;top:158.7px">4286613</span>
<span style="left:272.4px;top:158.7px">1071653</span>
<span style="left:330.5px;top:158.7px">41,0</span>
<span style="left:364.7px;top:158.7px">15</span>
<span style="left:386.9px;top:158.7px">9/12</span>
<span style="left:1.3px;top:173.8px">15</span>
<span style="left:23.9px;top:173.8px">+0,01</span>
<span style="left:64.6px;top:173.8px">40-34</span>
<span style="left:106.6px;top:173.8px">11-17</span>
<span style="left:175.0px;top:173.8px">4&quot;00</span>
<span style="left:211.6px;top:173.8px">4328456</span>
<span style="left:272.4px;top:173.8px">1082114</span>
<span style="left:330.5px;top:173.8px">41,1</span>
<span style="left:364.7px;top:173.8px">15</span>
<span style="left:385.2px;top:173.8px">10/12</span>
<span style="left:1.3px;top:188.8px">15</span>
<span style="left:23.9px;top:188.8px">+0,01</span>
<span style="left:64.6px;top:188.8px">40-34</span>
<span style="left:106.6px;top:188.8px">11-17</span>
<span style="left:175.0px;top:188.8px">4&quot;00</span>
<span style="left:211.6px;top:188.8px">4413400</span>
<span style="left:272.4px;top:188.8px">1103350</span>
<span style="left:330.5px;top:188.8px">41,3</span>
<span style="left:364.7px;top:188.8px">15</span>
<span style="left:385.2px;top:188.8px">11/12</span>
<span style="left:1.3px;top:203.9px">15</span>
<span style="left:23.9px;top:203.9px">+0,01</span>
<span style="left:64.6px;top:203.9px">40-34</span>
<span style="left:106.6px;top:203.9px">11-17</span>
<span style="left:175.0px;top:203.9px">4&quot;00</span>
<span style="left:211.6px;top:203.9px">4447229</span>
<span style="left:272.4px;top:203.9px">1111807</span>
<span style="left:330.5px;top:203.9px">41,5</span>
<span style="left:364.7px;top:203.9px">15</span>
<span style="left:385.2px;top:203.9px">12/12</span>
</div>
<div class="abs" style="left:1239px;top:272px;width:2px;height:48px;background:#5a5a5a;opacity:0.55;border-radius:1px"></div>
<div class="wh" style="left:822px;top:323px;width:419px;height:23px;border-bottom:1px solid #e9e9e9;box-sizing:border-box"></div>
<div class="abs" style="left:875px;top:323px;width:1px;height:22px;background:#ececec"></div>
<div class="hd" style="left:828.4px;top:323px;letter-spacing:0.6px">Blanc</div><div class="hd" style="left:882.2px;top:323px">Noir</div>
<div class="wh mv" style="left:822px;top:346px;width:419px;height:220px">
<span style="left:4.2px;top:-8.9px">40-45</span><span style="left:58.2px;top:-8.9px">10-14</span>
<span style="left:4.2px;top:12.0px">32-28</span><span style="left:58.2px;top:12.0px">23x32</span>
<span style="left:4.2px;top:32.9px">37x28</span><span style="left:58.2px;top:32.9px">5-10</span>
<span style="left:4.2px;top:53.8px">30-24</span><span style="left:58.2px;top:53.8px">20x29</span>
<span style="left:4.2px;top:74.7px">34x23</span><span style="left:58.2px;top:74.7px">18x29</span>
<span style="left:4.2px;top:95.6px">33x24</span><span style="left:58.2px;top:95.6px">19x30</span>
<span style="left:4.2px;top:116.5px">35x24</span><span style="left:58.2px;top:116.5px">14-20</span>
<span style="left:4.2px;top:137.4px">28-22</span><span style="left:58.2px;top:137.4px">20x29</span>
<span style="left:4.2px;top:158.3px">39-34</span><span style="left:58.2px;top:158.3px">17x28</span>
<span style="left:4.2px;top:179.2px">34x32</span><span style="left:58.2px;top:179.2px">15-20</span>
<span style="left:4.2px;top:200.1px">41-37</span><span style="left:58.2px;top:200.1px">10-14</span>
</div>
<div class="gb" style="left:822px;top:574px;width:419px;height:51px;border-left-color:#dcd9d6;border-top:none"></div><div class="abs" style="left:907px;top:574px;width:334px;height:1px;background:#cdc9c6"></div>
<div class="gt" style="left:826px;top:563px;padding-right:2px;letter-spacing:0.45px;background:none">Navigation</div>
<div class="btn" style="left:827.0px;top:586px;width:35.6px;height:33.6px"></div>
<svg class="ico" style="left:831.4px;top:592.5px" width="28" height="20" viewBox="-14 -10 28 20"><g fill="none" stroke-linecap="round" stroke-linejoin="round"><rect x="-7.3" y="-7.3" width="2.2" height="14.6" rx="1.1" fill="#f8f7f6" stroke="#c6c3c0" stroke-width="0.9"/><path d="M4.4,-6.2 L-2.2,0 L4.4,6.2" stroke="#c6c3c0" stroke-width="3.4"/><path d="M4.4,-6.2 L-2.2,0 L4.4,6.2" stroke="#f8f7f6" stroke-width="1.3"/><circle cx="5.6" cy="0" r="1.15" fill="#f8f7f6" stroke="#c6c3c0" stroke-width="0.9"/></g></svg>
<div class="btn" style="left:862.9px;top:586px;width:35.6px;height:33.6px"></div>
<svg class="ico" style="left:866.7px;top:592.5px" width="28" height="20" viewBox="-14 -10 28 20"><g fill="none" stroke-linecap="round" stroke-linejoin="round"><path d="M0.4,-6.2 L-6.2,0 L0.4,6.2" stroke="#c6c3c0" stroke-width="3.4"/><path d="M0.4,-6.2 L-6.2,0 L0.4,6.2" stroke="#f8f7f6" stroke-width="1.3"/><circle cx="2.6" cy="0" r="1.15" fill="#f8f7f6" stroke="#c6c3c0" stroke-width="0.9"/><circle cx="6.9" cy="0" r="1.15" fill="#f8f7f6" stroke="#c6c3c0" stroke-width="0.9"/></g></svg>
<div class="btn" style="left:898.8px;top:586px;width:35.6px;height:33.6px"></div>
<svg class="ico" style="left:902.6px;top:592.5px" width="28" height="20" viewBox="-14 -10 28 20"><g fill="none" stroke-linecap="round" stroke-linejoin="round"><path d="M-0.4,-6.2 L6.2,0 L-0.4,6.2" stroke="#c6c3c0" stroke-width="3.4"/><path d="M-0.4,-6.2 L6.2,0 L-0.4,6.2" stroke="#f8f7f6" stroke-width="1.3"/><circle cx="-2.6" cy="0" r="1.15" fill="#f8f7f6" stroke="#c6c3c0" stroke-width="0.9"/><circle cx="-6.9" cy="0" r="1.15" fill="#f8f7f6" stroke="#c6c3c0" stroke-width="0.9"/></g></svg>
<div class="btn" style="left:934.7px;top:586px;width:35.6px;height:33.6px"></div>
<svg class="ico" style="left:937.9px;top:592.5px" width="28" height="20" viewBox="-14 -10 28 20"><g fill="none" stroke-linecap="round" stroke-linejoin="round"><rect x="5.1" y="-7.3" width="2.2" height="14.6" rx="1.1" fill="#f8f7f6" stroke="#c6c3c0" stroke-width="0.9"/><path d="M-4.4,-6.2 L2.2,0 L-4.4,6.2" stroke="#c6c3c0" stroke-width="3.4"/><path d="M-4.4,-6.2 L2.2,0 L-4.4,6.2" stroke="#f8f7f6" stroke-width="1.3"/><circle cx="-5.6" cy="0" r="1.15" fill="#f8f7f6" stroke="#c6c3c0" stroke-width="0.9"/></g></svg>
<div class="gb" style="left:826px;top:637.5px;width:143px;height:36px"></div>
<div class="gt" style="left:825px;top:626px;padding:0 2px 0 5px">pions perdus</div>
<div class="abs" style="left:826.6px;top:649px;font-size:14.6px;line-height:16px;color:#2a2a2c;letter-spacing:0.3px">6/20</div>
<div class="abs" style="left:909.8px;top:649px;font-size:14.6px;line-height:16px;color:#2a2a2c;letter-spacing:0.3px">6/20</div>
<div class="abs" style="left:897px;top:650px;width:1px;height:18px;background:#dedbd8"></div>
<svg class="ico" style="left:863.7px;top:647.6px" width="22" height="22" viewBox="-11 -11 22 22"><circle r="10" fill="#e4b32a"/><circle r="7.6" fill="none" stroke="#f7e49a" stroke-width="1.2"/><circle r="5.4" fill="#f5cf4a" stroke="#d79f1c" stroke-width="1"/><circle r="2.8" fill="none" stroke="#f7e49a" stroke-width="1"/><circle r="9.6" fill="none" stroke="#d79f1c" stroke-width="0.8"/></svg>
<svg class="ico" style="left:946.8px;top:647.6px" width="22" height="22" viewBox="-11 -11 22 22"><circle r="10" fill="#4f2c24"/><circle r="7.6" fill="none" stroke="#8b5a4c" stroke-width="1.2"/><circle r="5.4" fill="#6d4034" stroke="#3c201a" stroke-width="1"/><circle r="2.8" fill="none" stroke="#8b5a4c" stroke-width="1"/><circle r="9.6" fill="none" stroke="#3c201a" stroke-width="0.8"/></svg>
<div class="abs" style="left:822px;top:678px;width:419px;height:1px;background:#cdc9c6"></div>
<div class="gb" style="left:10.5px;top:692.5px;width:805px;height:153px"></div>
<div class="gt" style="left:9px;top:681px;padding:0 2px 0 5px">Informations joueur</div>
<svg class="ico" style="left:54px;top:698px" width="62" height="82" viewBox="54 698 62 82">
<defs><linearGradient id="av1" x1="0" y1="0.2" x2="1" y2="0.8"><stop offset="0" stop-color="#5f82c6"/><stop offset="0.12" stop-color="#89a6de"/><stop offset="0.3" stop-color="#5b7dc2"/><stop offset="0.75" stop-color="#6487cc"/><stop offset="1" stop-color="#7d9ad6"/></linearGradient>
<linearGradient id="av2" x1="0" y1="0" x2="1" y2="0.6"><stop offset="0" stop-color="#c79a74"/><stop offset="0.35" stop-color="#f3cfae"/><stop offset="0.7" stop-color="#e3b48c"/><stop offset="1" stop-color="#c4946a"/></linearGradient>
<linearGradient id="av3" x1="0.2" y1="0" x2="0.6" y2="1"><stop offset="0" stop-color="#a6a6a6"/><stop offset="0.25" stop-color="#5c5c5c"/><stop offset="1" stop-color="#2e2e2e"/></linearGradient></defs>
<path d="M58.7,770.8 C58.4,763 59.6,755.6 61.7,751.6 C63.6,747.8 66.6,745 70.3,743.5 L78.9,741 L99.6,743.5 C104,745.4 107,748.6 108.7,752.6 C110,755 110.8,757.4 111,759.6 C110.4,763 108.6,765.6 105.7,767.7 C101.6,771 96.6,773.4 90.5,774.8 C85.6,776 80.6,776.5 75.4,776.3 C70.6,776 66.6,775.2 63.2,773.8 C61.2,773 59.6,772 58.7,770.8z" fill="url(#av1)" stroke="#1d2c4e" stroke-width="1.1"/>
<path d="M60.6,769.6 C60.4,762 61.6,756 63.4,752.4 C65,749.4 67.4,746.8 70.6,745.2" fill="none" stroke="#b5c8ee" stroke-opacity="0.7" stroke-width="1.1"/>
<path d="M80.6,733 L78.9,741 C81.6,747.6 87,751.6 92.6,751.2 C94.6,751 96,750 96.2,748.6 L96.1,740z" fill="#c9966c"/>
<path d="M80.6,733 L78.9,741 C81.6,747.6 87,751.6 92.6,751.2" fill="none" stroke="#8a5f3e" stroke-opacity="0.5" stroke-width="0.8"/>
<path d="M85.4,712.4 C91,709.6 101,710 106.6,714 C107.8,719.4 107.8,727 105.8,733 C104.2,738 101,741.8 97,743 C92.6,743.6 88.4,741 86,737.6 C84,734.6 83.4,731 83.6,727.6z" fill="url(#av2)"/>
<path d="M96,713 C101,713.6 104.6,715 106,716.4 C106.8,721 106.6,727 105,731.6 C102,726 99,720 96,713z" fill="#fff" fill-opacity="0.18"/>
<path d="M80.6,722.6 C82,721 84.6,722 85.2,724.8 C85.8,728 86,731.6 87.4,734.4 C85,733.6 82.6,731.4 81.2,728.6 C80.2,726.4 79.8,724 80.6,722.6z" fill="#d7a57c"/>
<path d="M80.4,735.6 C76.2,731 73.4,725.4 72.9,719 C72.4,711.4 76.4,705.4 83,703 C90.6,700.4 100.6,702.4 106.2,709 C106.8,710.6 106.6,712.6 105.6,714.2 C99.6,711 91.4,710.6 85.8,712.8 C86.8,717.4 86.4,720.6 85.6,723.4 C84.4,721.6 81.8,721 80.6,722.6 C79.8,725.4 81,729.6 83,732 C82.6,733.4 81.6,734.8 80.4,735.6z" fill="url(#av3)" stroke="#222" stroke-width="0.6"/>
</svg>
<div class="btn2" style="left:15px;top:780px;width:148px;height:33.5px"></div>
<div class="abs" style="left:15.5px;top:786px;width:147.5px;text-align:center;font-size:15.4px;line-height:18px;color:#33363c;letter-spacing:0.1px">Liste des parties</div>
<div class="abs" style="left:167px;top:700px;width:1px;height:114px;background:#d3cfcc"></div>
<div class="il" style="top:700.0px">Nom :</div>
<div class="il" style="top:716.0px">Prénom :</div>
<div class="il" style="top:732.0px">Nationalité :</div>
<div class="il" style="top:748.0px">Né le :</div>
<div class="il" style="top:764.0px">Titre :</div>
<svg class="ico" style="left:3px;top:848px" width="26" height="26" viewBox="3 848 26 26">
<g fill="#b7bbb5"><path d="M15,850.8 l2,2 -2,2 -2,-2z M11,854.9 l2,2 -2,2 -2,-2z M11,863 l2,2 -2,2 -2,-2z"/><rect x="22" y="859.6" width="3" height="3.2"/><path d="M23.5,858.4 l1.5,1.3 h-3z"/><rect x="18" y="863.8" width="3.1" height="3.1"/></g>
<g fill="#5cf00c"><path d="M19.1,854.6 l2.1,2.1 -2.1,2.1 -2.1,-2.1z M7,858.8 l2.1,2.1 -2.1,2.1 -2.1,-2.1z"/><path d="M14,858.9 h1.7 l1.6,2 -1.6,2 h-1.7z"/><rect x="13.9" y="867.8" width="3.2" height="3.2"/></g>
</svg>
<div class="gb" style="left:826px;top:692.5px;width:410px;height:153px"></div>
<div class="gt" style="left:825px;top:681px;padding:0 2px 0 5px;letter-spacing:0.14px">Base de données non configurée</div>
<div class="sl" style="left:811.6px;width:100px;top:700.7px">Tournoi :</div>
<div class="sl" style="left:811.6px;width:100px;top:711.6px">Url :</div>
<div class="sl" style="left:811.6px;width:100px;top:722.5px">Date :</div>
<div class="sl" style="left:811.6px;width:100px;top:733.5px">Tour :</div>
<div class="sl" style="left:811.6px;width:100px;top:745.2px">Blanc :</div>
<div class="sl" style="left:811.6px;width:100px;top:767.2px">Noir :</div>
<div class="sd" style="left:923.6px;top:722.5px">Pas de suggestion!</div>
<div class="sl" style="left:1124.2px;width:100px;text-align:center;top:700.7px">Coup</div>
<div class="sd" style="left:1124.2px;width:100px;text-align:center;top:711.4px;font-size:9px;letter-spacing:0.2px">**-**</div>
<div class="sl" style="left:1124.2px;width:100px;text-align:center;top:722.5px">Evaluation</div>
<div class="sd" style="left:1124.2px;width:100px;text-align:center;top:733.5px">0</div>
<div class="btn" style="left:1116px;top:757.4px;width:116.6px;height:33.2px"></div>
<svg class="ico" style="left:1143px;top:762px" width="22" height="24" viewBox="0 0 22 24">
<g fill="#727272"><path d="M1,16.6 l3.4,-1.2 2.4,1 -3.4,1.4z M6.4,14.4 l3.2,-1 2.4,0.9 -3.2,1.2z M6.6,18.8 l3.4,-1.3 2.5,1 -3.4,1.5z M12,16.3 l3.2,-1 2.4,0.9 -3.2,1.3z M3.6,19.4l3,-1 2.4,1 -3,1.3z M9.6,21.6l3,-1.2 2.4,1 -3,1.3z"/></g>
<g fill="#b7ee8f"><circle cx="14.2" cy="2.6" r="1.5"/><circle cx="16.6" cy="5.6" r="1.6"/><circle cx="13" cy="6.2" r="1.3"/><circle cx="16.8" cy="9.6" r="1.5"/><circle cx="13.2" cy="10.4" r="1.4"/><circle cx="15.4" cy="13.4" r="1.3"/><circle cx="11.8" cy="13.8" r="1.1"/></g>
</svg>
<div class="bt" style="left:1164.6px;top:764.6px">Jouer</div>
<div class="abs" style="left:932.8px;top:789px;font-size:12.7px;line-height:15px;color:#a9a9ab;white-space:nowrap">Suggestions...</div>
<div class="abs" style="left:1116px;top:789.4px;font-size:15.5px;line-height:18px;color:#2a2a2c;letter-spacing:0.3px">0/0</div>
<div class="abs" style="left:829px;top:805px;width:287px;height:3px;border-radius:2px;background:#d3cfcc"></div>
<div class="btn" style="left:829.2px;top:809.4px;width:82.4px;height:33.2px"></div>
<div class="btn" style="left:912.6px;top:809.4px;width:113.9px;height:33.2px"></div>
<div class="btn" style="left:1027.5px;top:809.4px;width:87.9px;height:33.2px"></div>
<div class="btn" style="left:1116.0px;top:809.4px;width:116.6px;height:33.2px"></div>
<svg class="ico" style="left:832.5px;top:816.0px" width="28" height="20" viewBox="-14 -10 28 20"><g fill="none" stroke-linecap="round" stroke-linejoin="round"><rect x="-7.3" y="-7.3" width="2.2" height="14.6" rx="1.1" fill="#f8f7f6" stroke="#bab7b4" stroke-width="0.9"/><path d="M4.4,-6.2 L-2.2,0 L4.4,6.2" stroke="#bab7b4" stroke-width="3.4"/><path d="M4.4,-6.2 L-2.2,0 L4.4,6.2" stroke="#f8f7f6" stroke-width="1.3"/><circle cx="5.6" cy="0" r="1.15" fill="#f8f7f6" stroke="#bab7b4" stroke-width="0.9"/></g></svg>
<div class="bt" style="left:857.6px;top:814.8px;letter-spacing:0.55px">Début</div>
<svg class="ico" style="left:916.5px;top:816.0px" width="28" height="20" viewBox="-14 -10 28 20"><g fill="none" stroke-linecap="round" stroke-linejoin="round"><path d="M0.4,-6.2 L-6.2,0 L0.4,6.2" stroke="#bab7b4" stroke-width="3.4"/><path d="M0.4,-6.2 L-6.2,0 L0.4,6.2" stroke="#f8f7f6" stroke-width="1.3"/><circle cx="2.6" cy="0" r="1.15" fill="#f8f7f6" stroke="#bab7b4" stroke-width="0.9"/><circle cx="6.9" cy="0" r="1.15" fill="#f8f7f6" stroke="#bab7b4" stroke-width="0.9"/></g></svg>
<div class="bt" style="left:940.3px;top:814.8px;letter-spacing:0.65px">Précédent</div>
<svg class="ico" style="left:1031.5px;top:816.0px" width="28" height="20" viewBox="-14 -10 28 20"><g fill="none" stroke-linecap="round" stroke-linejoin="round"><path d="M-0.4,-6.2 L6.2,0 L-0.4,6.2" stroke="#bab7b4" stroke-width="3.4"/><path d="M-0.4,-6.2 L6.2,0 L-0.4,6.2" stroke="#f8f7f6" stroke-width="1.3"/><circle cx="-2.6" cy="0" r="1.15" fill="#f8f7f6" stroke="#bab7b4" stroke-width="0.9"/><circle cx="-6.9" cy="0" r="1.15" fill="#f8f7f6" stroke="#bab7b4" stroke-width="0.9"/></g></svg>
<div class="bt" style="left:1055.2px;top:814.8px;letter-spacing:0">Suivant</div>
<svg class="ico" style="left:1126px;top:817px" width="16" height="18" viewBox="0 0 16 18">
<rect x="1.2" y="1.4" width="12.8" height="14.8" rx="1" fill="#f6f5f4" stroke="#c4c0bd" stroke-width="1"/>
<path d="M3,3.4 h9" stroke="#e3e0de" stroke-width="1"/>
<circle cx="7.6" cy="10.2" r="3.5" fill="none" stroke="#f4d9d6" stroke-width="2.2"/>
<circle cx="7.6" cy="10.2" r="3.5" fill="none" stroke="#e0605c" stroke-width="2.2" stroke-dasharray="2.75 2.75" stroke-dashoffset="1.4"/>
</svg>
<div class="bt" style="left:1144px;top:814.8px;letter-spacing:0.15px">Suggestion</div>
<div class="abs" style="left:821px;top:850px;width:5px;height:1px;background:#d2cfcc"></div>
<div id="frame"></div>
</body></html>
